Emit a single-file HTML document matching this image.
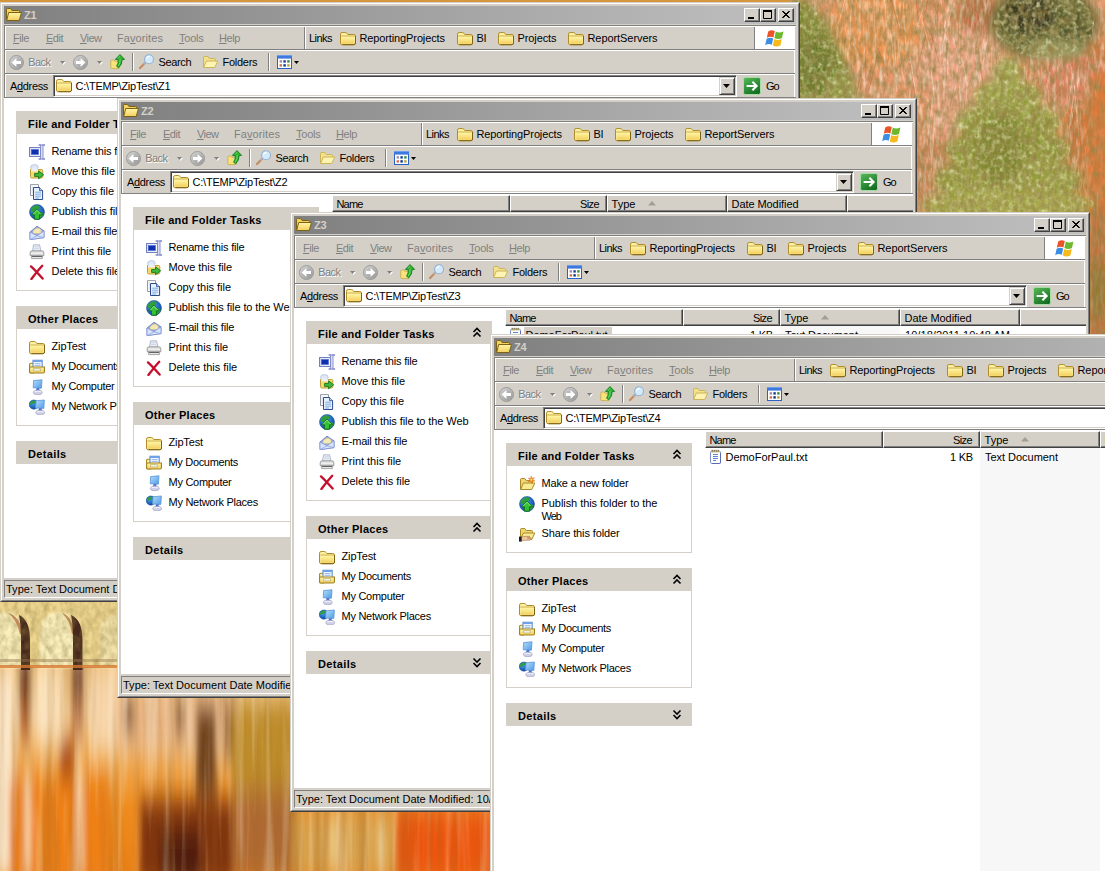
<!DOCTYPE html><html><head><meta charset="utf-8"><title>Z1 Z2 Z3 Z4</title><style>
html,body{margin:0;padding:0;background:#fff;}
body{width:1115px;height:871px;overflow:hidden;position:relative;font:11px/13px "Liberation Sans", sans-serif;color:#000;}
#desk{position:absolute;left:0;top:0;width:1105px;height:871px;overflow:hidden;background:#d9954a;}
#desk div,#desk span,#desk svg.i{position:absolute;box-sizing:border-box;}
.t{white-space:pre;line-height:13px;height:13px;}
.b{font-weight:bold;}
.sh{text-shadow:1px 1px 0 #fff;}
u{text-decoration:underline;text-underline-offset:1px;}
.win{width:800px;height:600px;background:#d4d0c8;border:1px solid;border-color:#d4d0c8 #404040 #404040 #d4d0c8;overflow:hidden;}
.win>*{margin:-1px 0 0 -1px;}
.win2{left:1px;top:1px;width:798px;height:598px;border:1px solid;border-color:#fff #808080 #808080 #fff;}
.cb{width:16px;height:14px;background:#d4d0c8;border:1px solid;border-color:#fff #404040 #404040 #fff;box-shadow:inset -1px -1px 0 #808080;}
.combo{background:#fff;border:1px solid;border-color:#808080 #fff #fff #808080;box-shadow:inset 1px 1px 0 #404040, inset -1px -1px 0 #d4d0c8;}
.ddb{width:16px;height:18px;background:#d4d0c8;border:1px solid;border-color:#d4d0c8 #404040 #404040 #d4d0c8;box-shadow:inset 1px 1px 0 #fff, inset -1px -1px 0 #808080;}
.lh{background:#d4d0c8;border:1px solid;border-color:#fff #404040 #404040 #fff;box-shadow:inset -1px -1px 0 #808080;}
.sb{border:1px solid;border-color:#808080 #fff #fff #808080;overflow:hidden;}
</style></head><body><svg width="0" height="0" style="position:absolute"><defs>
<linearGradient id="gF" x1="0" y1="0" x2="0" y2="1"><stop offset="0" stop-color="#fff7a8"/><stop offset="1" stop-color="#f3cf5e"/></linearGradient>
<linearGradient id="gC" x1="0" y1="0" x2="1" y2="1"><stop offset="0" stop-color="#d6d6d6"/><stop offset="1" stop-color="#8e8e8e"/></linearGradient>
<linearGradient id="gG" x1="0" y1="0" x2="0.6" y2="1"><stop offset="0" stop-color="#58bb58"/><stop offset="1" stop-color="#167024"/></linearGradient>
<radialGradient id="gE" cx="0.4" cy="0.35" r="0.7"><stop offset="0" stop-color="#4a9cf0"/><stop offset="1" stop-color="#0c47a6"/></radialGradient>
<linearGradient id="gM" x1="0" y1="0" x2="1" y2="1"><stop offset="0" stop-color="#b4defc"/><stop offset="1" stop-color="#4f9be6"/></linearGradient>
</defs></svg><div id="desk"><svg class="i" style="left:0;top:0" width="1105" height="871" viewBox="0 0 1105 871">
<defs>
<filter id="b6" x="-10%" y="-10%" width="120%" height="120%"><feGaussianBlur stdDeviation="5"/></filter>
<filter id="b3" x="-10%" y="-10%" width="120%" height="120%"><feGaussianBlur stdDeviation="1.2"/></filter>
<filter id="bv" x="-10%" y="-10%" width="120%" height="120%"><feGaussianBlur stdDeviation="3 14"/></filter>
<filter id="nz" x="0" y="0" width="100%" height="100%"><feTurbulence type="fractalNoise" baseFrequency="0.16 0.11" numOctaves="3" seed="7"/><feColorMatrix type="matrix" values="0 0 0 0 0.30  0 0 0 0 0.22  0 0 0 0 0.06  1.1 1.1 0 0 -0.8"/></filter>
<filter id="nl" x="0" y="0" width="100%" height="100%"><feTurbulence type="fractalNoise" baseFrequency="0.3 0.07" numOctaves="3" seed="11"/><feColorMatrix type="matrix" values="0 0 0 0 1  0 0 0 0 0.92  0 0 0 0 0.78  0 1.1 1.1 0 -0.95"/></filter>
<filter id="ng" x="0" y="0" width="100%" height="100%"><feTurbulence type="fractalNoise" baseFrequency="0.22 0.2" numOctaves="2" seed="21"/><feColorMatrix type="matrix" values="0 0 0 0 0.85  0 0 0 0 0.88  0 0 0 0 0.5  0 1.6 1.2 0 -1.25"/></filter>
<filter id="nd" x="0" y="0" width="100%" height="100%"><feTurbulence type="fractalNoise" baseFrequency="0.2 0.22" numOctaves="2" seed="33"/><feColorMatrix type="matrix" values="0 0 0 0 0.2  0 0 0 0 0.24  0 0 0 0 0.05  1.6 0 1.2 0 -1.2"/></filter>
<clipPath id="cCon"><path d="M806 0L826 22L840 50L852 78L858 102L792 102L792 0Z"/><ellipse cx="1044" cy="24" rx="50" ry="34"/><ellipse cx="1008" cy="72" rx="14" ry="14"/><ellipse cx="1008" cy="96" rx="34" ry="16"/><ellipse cx="1008" cy="122" rx="52" ry="20"/><ellipse cx="1008" cy="150" rx="62" ry="22"/><ellipse cx="1008" cy="180" rx="74" ry="24"/><ellipse cx="1008" cy="204" rx="86" ry="16"/></clipPath>
<filter id="ws" x="0" y="0" width="100%" height="100%"><feTurbulence type="fractalNoise" baseFrequency="0.09 0.004" numOctaves="3" seed="3"/><feColorMatrix type="matrix" values="0 0 0 0 0.3  0 0 0 0 0.12  0 0 0 0 0.02  1.6 0 0 0 -0.7"/></filter>
<filter id="wl" x="0" y="0" width="100%" height="100%"><feTurbulence type="fractalNoise" baseFrequency="0.11 0.005" numOctaves="3" seed="9"/><feColorMatrix type="matrix" values="0 0 0 0 1  0 0 0 0 0.92  0 0 0 0 0.75  0 1.5 0 0 -0.72"/></filter>
<linearGradient id="wg" x1="0" y1="0" x2="0" y2="1">
<stop offset="0" stop-color="rgb(244,198,128)"/><stop offset="0.25" stop-color="rgb(244,202,144)"/><stop offset="0.5" stop-color="rgb(240,166,76)"/><stop offset="0.7" stop-color="rgb(238,140,30)"/><stop offset="1" stop-color="rgb(232,128,22)"/></linearGradient>
<clipPath id="cTR"><rect x="790" y="0" width="315" height="345"/></clipPath>
<clipPath id="cBL"><rect x="0" y="596" width="495" height="275"/></clipPath>
</defs>
<rect width="1105" height="871" fill="rgb(222,150,90)"/>
<rect x="0" y="0" width="800" height="3" fill="rgb(214,150,60)"/>
<g clip-path="url(#cTR)">
<rect x="790" y="0" width="315" height="345" fill="rgb(230,152,108)"/>
<g filter="url(#b6)">
<ellipse cx="875" cy="28" rx="48" ry="40" fill="rgb(238,150,84)"/>
<ellipse cx="960" cy="90" rx="50" ry="60" fill="rgb(238,164,132)"/>
<ellipse cx="905" cy="120" rx="30" ry="40" fill="rgb(232,150,104)"/>
<ellipse cx="1092" cy="130" rx="28" ry="90" fill="rgb(216,118,62)"/>
<ellipse cx="1075" cy="75" rx="30" ry="22" fill="rgb(226,128,96)"/>
<ellipse cx="935" cy="175" rx="26" ry="40" fill="rgb(212,136,92)"/>
<ellipse cx="978" cy="14" rx="20" ry="20" fill="rgb(196,112,72)"/>
<ellipse cx="1072" cy="84" rx="36" ry="20" fill="rgb(226,132,100)"/>
</g>
<rect x="790" y="0" width="315" height="345" filter="url(#nl)" opacity=".7"/>
<path d="M1000 165l9 -61M843 111l3 -67M959 68l1 -49M909 199l-7 -59M999 45l7 -25M1095 190l9 -38M889 203l9 -56M931 52l-9 -32M836 152l-4 -40M919 114l-9 -57M1034 185l6 -26M837 29l9 -33M1081 204l-3 -40M864 166l7 -61M859 86l8 -52M979 81l-6 -39M1018 214l-9 -32M943 66l7 -52M850 199l-0 -26M1029 205l6 -53M875 185l-1 -38M1094 108l5 -47M942 49l10 -42M967 86l-5 -29M931 173l4 -60M931 157l-0 -38M913 204l2 -54M901 151l6 -46M927 146l7 -58M1066 154l9 -69M879 183l-0 -67M1029 54l2 -60M1000 171l4 -54M952 147l4 -35M960 64l-7 -27M886 27l-2 -46M898 196l-2 -25M865 182l-9 -42M979 86l9 -51M1050 145l-7 -42M1089 209l-3 -52M864 130l-7 -53M935 104l-4 -35M1090 198l-5 -52M945 82l-0 -69M867 141l-4 -45M838 124l9 -37M906 50l-4 -69M1006 138l-8 -58M976 86l1 -38M1032 135l-5 -27M1070 126l6 -26M1023 143l8 -47M1061 58l7 -38M1019 104l6 -38M962 127l-3 -47M1050 33l6 -35M842 161l10 -69M1058 63l9 -54M913 199l2 -32M1000 28l-2 -30M987 165l-7 -65M994 115l-3 -67M875 143l8 -48M905 128l5 -36M897 92l-6 -58M858 150l-8 -29M1067 114l6 -40M849 49l4 -68M1093 150l-7 -62M897 85l-3 -53M1055 146l-1 -61M992 132l-2 -58M889 28l-0 -65M960 194l-1 -53M876 51l-2 -42M902 74l-4 -32M844 200l9 -42M960 204l3 -30M1028 52l-10 -34M941 210l-4 -41M1029 160l-5 -32M1006 104l-10 -69M944 29l10 -50M860 34l-0 -65M900 30l-9 -43M916 30l9 -27M942 124l-4 -29M1079 137l-6 -64M964 131l3 -42" stroke="rgb(255,238,220)" stroke-width=".9" fill="none" opacity=".55"/>
<path d="M917 108l-7 -44M866 81l7 -18M1052 81l-10 -20M900 36l2 -30M900 32l-11 -40M888 76l-10 -28M946 81l1 -41M1072 148l2 -42M952 179l11 -38M1028 157l7 -24M936 45l-8 -17M905 152l-10 -25M1037 129l-11 -16M869 90l11 -45M997 65l-3 -30M923 22l8 -35M1028 39l-8 -34M1023 107l7 -48M866 82l-1 -47M950 106l10 -42M976 209l-10 -36M1051 102l11 -17M844 133l9 -32M939 62l-7 -25M984 90l-6 -41M928 68l8 -49M1060 141l-9 -29M1055 116l-8 -16M861 160l-7 -47M1046 83l9 -39M1000 176l-12 -28M971 134l-3 -21M919 25l-3 -26M961 157l12 -29M1051 200l4 -39M977 176l2 -28M1015 122l-10 -25M858 89l6 -35M1024 80l-5 -48M1025 34l4 -41M1089 195l8 -39M1031 139l0 -22M1072 67l1 -49M939 21l-8 -29M1008 195l3 -47M937 41l1 -39M1025 93l-7 -46M916 72l10 -37M879 143l-7 -42M852 130l9 -44M1028 101l1 -30M1075 79l3 -25M1091 57l-9 -16M984 138l-7 -21M993 146l5 -39M851 115l11 -44M919 186l10 -38M896 156l-1 -44M862 58l-10 -20M875 140l6 -19" stroke="rgb(190,90,50)" stroke-width="1" fill="none" opacity=".4"/>
<g filter="url(#b6)">
<path d="M806 0 L826 22 L840 50 L852 78 L858 102 L792 102 L792 0 Z" fill="rgb(124,138,46)"/>
<ellipse cx="816" cy="66" rx="20" ry="30" fill="rgb(100,118,34)"/>
<ellipse cx="838" cy="88" rx="14" ry="12" fill="rgb(150,160,70)"/>
<ellipse cx="1044" cy="22" rx="54" ry="38" fill="rgb(98,100,48)"/>
<ellipse cx="1030" cy="14" rx="28" ry="20" fill="rgb(46,44,24)"/>
<ellipse cx="1075" cy="30" rx="18" ry="16" fill="rgb(70,72,34)"/>
<ellipse cx="1058" cy="50" rx="30" ry="10" fill="rgb(150,152,96)"/>
<ellipse cx="1008" cy="72" rx="14" ry="14" fill="rgb(162,168,72)"/>
<ellipse cx="1008" cy="96" rx="34" ry="16" fill="rgb(158,164,66)"/>
<ellipse cx="1008" cy="122" rx="52" ry="20" fill="rgb(150,158,58)"/>
<ellipse cx="1008" cy="150" rx="62" ry="22" fill="rgb(144,152,54)"/>
<ellipse cx="1008" cy="180" rx="74" ry="24" fill="rgb(154,160,60)"/>
<ellipse cx="1008" cy="206" rx="86" ry="18" fill="rgb(170,172,72)"/>
<ellipse cx="1000" cy="150" rx="24" ry="36" fill="rgb(124,134,42)"/>
<ellipse cx="1100" cy="140" rx="16" ry="70" fill="rgb(220,120,56)"/>
<rect x="1086" y="208" width="24" height="134" fill="rgb(190,114,58)"/>
<ellipse cx="1098" cy="290" rx="10" ry="30" fill="rgb(150,118,50)"/>
</g>
<g clip-path="url(#cCon)"><rect x="790" y="0" width="315" height="220" filter="url(#ng)" opacity=".95"/><rect x="790" y="0" width="315" height="220" filter="url(#nd)" opacity=".5"/></g>
<rect x="790" y="0" width="315" height="345" filter="url(#nz)"/>
<rect x="790" y="0" width="315" height="345" filter="url(#nl)" opacity=".22"/>
</g>
<g clip-path="url(#cBL)">
<rect x="0" y="660" width="495" height="211" fill="url(#wg)"/>
<g filter="url(#bv)">
<rect x="-6" y="670" width="20" height="210" fill="rgb(250,228,196)"/>
<rect x="34" y="670" width="30" height="70" fill="rgb(250,222,180)"/>
<rect x="90" y="670" width="28" height="80" fill="rgb(248,214,170)"/>
<rect x="118" y="690" width="120" height="60" fill="rgb(232,180,130)"/>
<rect x="20" y="655" width="10" height="62" fill="rgb(92,44,22)"/>
<rect x="21" y="700" width="8" height="40" fill="rgb(170,90,40)"/>
<rect x="73" y="655" width="10" height="62" fill="rgb(92,44,22)"/>
<rect x="74" y="700" width="8" height="40" fill="rgb(170,90,40)"/>
<rect x="60" y="740" width="14" height="60" fill="rgb(170,80,20)"/>
<rect x="124" y="700" width="10" height="30" fill="rgb(110,70,40)"/>
<rect x="176" y="700" width="8" height="34" fill="rgb(120,80,50)"/>
<rect x="196" y="705" width="20" height="90" fill="rgb(112,66,30)"/>
<rect x="224" y="700" width="10" height="60" fill="rgb(150,100,50)"/>
<rect x="140" y="800" width="92" height="90" fill="rgb(128,52,10)"/>
<rect x="160" y="830" width="40" height="60" fill="rgb(80,30,8)"/>
<rect x="232" y="700" width="62" height="90" fill="rgb(190,140,44)"/>
<rect x="232" y="790" width="62" height="90" fill="rgb(176,106,48)"/>
<rect x="292" y="810" width="104" height="70" fill="rgb(216,160,72)"/>
<rect x="396" y="810" width="100" height="70" fill="rgb(236,84,14)"/>
<rect x="10" y="780" width="100" height="100" fill="rgb(238,128,18)"/>
<rect x="25" y="770" width="5" height="110" fill="rgb(250,226,180)"/>
<rect x="78" y="770" width="5" height="110" fill="rgb(250,220,170)"/>
<rect x="330" y="812" width="6" height="60" fill="rgb(240,210,140)"/>
<rect x="378" y="812" width="6" height="60" fill="rgb(236,200,130)"/>
</g>
<rect x="0" y="666" width="495" height="205" filter="url(#ws)" opacity=".45"/>
<rect x="0" y="666" width="495" height="205" filter="url(#wl)" opacity=".6"/>
<rect x="0" y="598" width="120" height="69" fill="rgb(238,214,144)"/>
<g filter="url(#b3)">
<path d="M-14 668 V636 Q-14 612 5 612 Q24 612 24 636 V668Z" fill="rgb(250,240,190)"/>
<path d="M40 668 V636 Q40 612 59 612 Q78 612 78 636 V668Z" fill="rgb(250,240,190)"/>
<path d="M100 668 V634 Q100 616 118 614 V668Z" fill="rgb(242,226,170)"/>
</g>
<path d="M8 613 Q20 616 23 634 L20 634 Q17 620 8 613Z" fill="rgb(200,140,90)"/>
<path d="M19 615 Q30 620 30 640 V670 H21 V640 Q21 626 19 615Z" fill="rgb(70,40,28)"/>
<path d="M62 613 Q72 616 75 634 L72 634 Q70 620 62 613Z" fill="rgb(200,140,90)"/>
<path d="M71 615 Q82.5 620 82.5 640 V670 H73 V640 Q73 626 71 615Z" fill="rgb(70,40,28)"/>
<rect x="0" y="598" width="120" height="68" filter="url(#nz)" opacity=".55"/>
<rect x="0" y="659" width="120" height="3" fill="rgb(150,120,80)" opacity=".45"/>
<rect x="0" y="665" width="120" height="3" fill="rgb(214,120,50)" opacity=".8"/>
</g>
</svg><div class="win" style="left:0px;top:2px"><div class="win2"></div><div style="left:4px;top:4px;width:792px;height:18px;background:linear-gradient(90deg,#808080,#c0c0c0)"></div><svg class="i" style="left:6px;top:5px" width="16" height="16" viewBox="0 0 16 16"><path d="M0.5 12.5V2.6Q0.5 1.5 1.6 1.5H4.6L6 3.5H12.4Q13.5 3.5 13.5 4.6V6" fill="#f3d45e" stroke="#7d6216"/><path d="M0.7 13.5L2.7 5.5H15.5L13.2 13.5Z" fill="url(#gF)" stroke="#7d6216" stroke-linejoin="round"/></svg><span class="t b" style="left:24px;top:7px;letter-spacing:-0.172px;color:#d4d0c8;">Z1</span><div class="cb" style="left:744px;top:6px"><svg width="14" height="12" viewBox="0 0 14 12" style="position:absolute;left:0;top:0"><rect x="3" y="8" width="6" height="2" fill="#000"/></svg></div><div class="cb" style="left:760px;top:6px"><svg width="14" height="12" viewBox="0 0 14 12" style="position:absolute;left:0;top:0"><path d="M2.5 1.5h8v8h-8z" fill="none" stroke="#000" stroke-width="1"/><rect x="2" y="1" width="9" height="2" fill="#000"/></svg></div><div class="cb" style="left:778px;top:6px"><svg width="14" height="12" viewBox="0 0 14 12" style="position:absolute;left:0;top:0"><path d="M3.5 2.5l6 6M4.5 2.5l6 6M9.5 2.5l-6 6M10.5 2.5l-6 6" stroke="#000" stroke-width="1" fill="none" stroke-linecap="square"/></svg></div><div style="left:4px;top:23px;width:792px;height:1px;background:#808080"></div><div style="left:4px;top:24px;width:792px;height:1px;background:#fff"></div><div style="left:4px;top:23px;width:1px;height:73px;background:#808080"></div><div style="left:5px;top:24px;width:1px;height:71px;background:#fff"></div><div style="left:794px;top:24px;width:1px;height:71px;background:#fff"></div><div style="left:5px;top:47px;width:790px;height:1px;background:#808080"></div><div style="left:5px;top:48px;width:790px;height:1px;background:#fff"></div><div style="left:5px;top:71px;width:790px;height:1px;background:#808080"></div><div style="left:5px;top:72px;width:790px;height:1px;background:#fff"></div><div style="left:4px;top:95px;width:792px;height:1px;background:#808080"></div><span class="t" style="left:13px;top:30px;letter-spacing:-0.434px;color:#808080;"><u>F</u>ile</span><span class="t" style="left:46px;top:30px;letter-spacing:-0.492px;color:#808080;"><u>E</u>dit</span><span class="t" style="left:80px;top:30px;letter-spacing:-0.539px;color:#808080;"><u>V</u>iew</span><span class="t" style="left:117px;top:30px;letter-spacing:0.083px;color:#808080;">Fa<u>v</u>orites</span><span class="t" style="left:179px;top:30px;letter-spacing:-0.237px;color:#808080;"><u>T</u>ools</span><span class="t" style="left:219px;top:30px;letter-spacing:-0.406px;color:#808080;"><u>H</u>elp</span><div style="left:304px;top:25px;width:1px;height:22px;background:#808080"></div><div style="left:305px;top:25px;width:1px;height:22px;background:#fff"></div><span class="t" style="left:309px;top:30px;letter-spacing:-0.537px;">Links</span><svg class="i" style="left:340px;top:29px" width="16" height="16" viewBox="0 0 16 16"><path d="M0.5 3.2Q0.5 1.5 2.2 1.5H5.4Q6.3 1.5 6.9 2.3L7.8 3.5H13.8Q15.5 3.5 15.5 5.2V12Q15.5 13.7 13.8 13.7H2.2Q0.5 13.7 0.5 12Z" fill="#fdf2a4" stroke="#b08c28"/><path d="M1.5 5.5H14.5V11.8Q14.5 12.7 13.6 12.7H2.4Q1.5 12.7 1.5 11.8Z" fill="url(#gF)"/><path d="M1.2 5H14.8" stroke="#c6a23c" stroke-width="1" opacity=".85"/><path d="M15.5 5V12Q15.5 13.7 13.8 13.7H2.5" fill="none" stroke="#7d6216"/></svg><span class="t" style="left:359.5px;top:30px;letter-spacing:-0.120px;">ReportingProjects</span><svg class="i" style="left:457px;top:29px" width="16" height="16" viewBox="0 0 16 16"><path d="M0.5 3.2Q0.5 1.5 2.2 1.5H5.4Q6.3 1.5 6.9 2.3L7.8 3.5H13.8Q15.5 3.5 15.5 5.2V12Q15.5 13.7 13.8 13.7H2.2Q0.5 13.7 0.5 12Z" fill="#fdf2a4" stroke="#b08c28"/><path d="M1.5 5.5H14.5V11.8Q14.5 12.7 13.6 12.7H2.4Q1.5 12.7 1.5 11.8Z" fill="url(#gF)"/><path d="M1.2 5H14.8" stroke="#c6a23c" stroke-width="1" opacity=".85"/><path d="M15.5 5V12Q15.5 13.7 13.8 13.7H2.5" fill="none" stroke="#7d6216"/></svg><span class="t" style="left:476.5px;top:30px;letter-spacing:-0.453px;">BI</span><svg class="i" style="left:498px;top:29px" width="16" height="16" viewBox="0 0 16 16"><path d="M0.5 3.2Q0.5 1.5 2.2 1.5H5.4Q6.3 1.5 6.9 2.3L7.8 3.5H13.8Q15.5 3.5 15.5 5.2V12Q15.5 13.7 13.8 13.7H2.2Q0.5 13.7 0.5 12Z" fill="#fdf2a4" stroke="#b08c28"/><path d="M1.5 5.5H14.5V11.8Q14.5 12.7 13.6 12.7H2.4Q1.5 12.7 1.5 11.8Z" fill="url(#gF)"/><path d="M1.2 5H14.8" stroke="#c6a23c" stroke-width="1" opacity=".85"/><path d="M15.5 5V12Q15.5 13.7 13.8 13.7H2.5" fill="none" stroke="#7d6216"/></svg><span class="t" style="left:517.5px;top:30px;letter-spacing:-0.094px;">Projects</span><svg class="i" style="left:568px;top:29px" width="16" height="16" viewBox="0 0 16 16"><path d="M0.5 3.2Q0.5 1.5 2.2 1.5H5.4Q6.3 1.5 6.9 2.3L7.8 3.5H13.8Q15.5 3.5 15.5 5.2V12Q15.5 13.7 13.8 13.7H2.2Q0.5 13.7 0.5 12Z" fill="#fdf2a4" stroke="#b08c28"/><path d="M1.5 5.5H14.5V11.8Q14.5 12.7 13.6 12.7H2.4Q1.5 12.7 1.5 11.8Z" fill="url(#gF)"/><path d="M1.2 5H14.8" stroke="#c6a23c" stroke-width="1" opacity=".85"/><path d="M15.5 5V12Q15.5 13.7 13.8 13.7H2.5" fill="none" stroke="#7d6216"/></svg><span class="t" style="left:587.5px;top:30px;letter-spacing:-0.071px;">ReportServers</span><div style="left:756px;top:24px;width:39px;height:23px;background:#fff"></div><div style="left:754px;top:25px;width:1px;height:22px;background:#808080"></div><div style="left:755px;top:25px;width:1px;height:22px;background:#fff"></div><svg class="i" style="left:764px;top:27px" width="22" height="18" viewBox="0 0 22 18"><path d="M4.2 2.4Q7.4 0.2 10.8 2L9.4 8.4Q6.2 6.8 2.8 8.8Z" fill="#ea5428"/><path d="M11.8 2.6Q15.2 4.6 19.4 2.4L18 9Q14 11.2 10.4 9Z" fill="#6cb82e"/><path d="M2.6 9.8Q5.8 7.8 9.2 9.4L7.8 15.8Q4.4 14.2 1.2 16.2Z" fill="#3c8ee4"/><path d="M10.2 10Q13.6 12.2 17.8 10L16.4 16.4Q12.4 18.6 8.8 16.4Z" fill="#f6ba1e"/></svg><svg class="i" style="left:8px;top:52px" width="17" height="17" viewBox="0 0 17 17"><circle cx="8.5" cy="8.5" r="7" fill="url(#gC)" stroke="#9a9a9a"/><circle cx="8.5" cy="8.5" r="6" fill="none" stroke="#e6e6e6" stroke-width=".6" opacity=".3"/><path d="M3.6 8.5L8.4 3.9V6.9H13V10.1H8.4V13.1Z" fill="#fff"/></svg><span class="t sh" style="left:28.3px;top:54px;letter-spacing:-0.617px;color:#808080;">Back</span><svg class="i" style="left:60px;top:59px" width="7" height="5" viewBox="0 0 7 5"><path d="M1 1h5l-2.5 3z" fill="#fff"/><path d="M0 0h5l-2.5 3z" fill="#808080"/></svg><svg class="i" style="left:72px;top:52px" width="17" height="17" viewBox="0 0 17 17"><circle cx="8.5" cy="8.5" r="7" fill="url(#gC)" stroke="#9a9a9a"/><circle cx="8.5" cy="8.5" r="6" fill="none" stroke="#e6e6e6" stroke-width=".6" opacity=".3"/><path d="M13.4 8.5L8.6 3.9V6.9H4V10.1H8.6V13.1Z" fill="#fff"/></svg><svg class="i" style="left:97px;top:59px" width="7" height="5" viewBox="0 0 7 5"><path d="M1 1h5l-2.5 3z" fill="#fff"/><path d="M0 0h5l-2.5 3z" fill="#808080"/></svg><svg class="i" style="left:110px;top:52px" width="17" height="17" viewBox="0 0 17 17"><path d="M0.8 7.2Q0.8 6 2 6H3.8L4.8 7.2H8.4Q9.4 7.2 9.4 8.2V13.4Q9.4 14.6 8.2 14.6H2Q0.8 14.6 0.8 13.4Z" fill="#f8e27c" stroke="#c8a83a" stroke-width=".8"/><path d="M10 0.6L14.6 5.4H12.2Q12.2 10.5 8.6 13.8L6.6 12.2Q8.6 9.5 8.2 5.4H5.4Z" fill="#30b530" stroke="#127a1e" stroke-width=".9" stroke-linejoin="round"/><path d="M10 2.2L8 4.4M10.2 5Q10.4 9 8.4 12" stroke="#8fe88f" stroke-width=".8" fill="none" opacity=".8"/></svg><div style="left:132px;top:51px;width:1px;height:18px;background:#808080"></div><div style="left:133px;top:51px;width:1px;height:18px;background:#fff"></div><svg class="i" style="left:138px;top:52px" width="17" height="17" viewBox="0 0 17 17"><path d="M7.2 8.8L2 14" stroke="#c88a5c" stroke-width="2.2" stroke-linecap="round"/><path d="M7.4 8.2L5.4 10.2" stroke="#b0b0b8" stroke-width="2"/><circle cx="11" cy="5.2" r="4.5" fill="#d4eafa" stroke="#8fb2d4" stroke-width="1.1"/><path d="M8.4 4.6Q9.2 2.4 11.6 2.4" stroke="#fff" stroke-width="1.2" fill="none"/></svg><span class="t" style="left:158.5px;top:54px;letter-spacing:-0.360px;">Search</span><svg class="i" style="left:202px;top:52px" width="17" height="16" viewBox="0 0 17 16"><path d="M1.5 13.5V3.6Q1.5 2.5 2.6 2.5H5.8L7.3 4.5H12.5Q13.5 4.5 13.5 5.5V7" fill="#f3e18c" stroke="#cdb458"/><path d="M1.6 13.5L4.4 7H15.8L12.8 13.5Z" fill="#fdf4b4" stroke="#cdb458" stroke-linejoin="round"/></svg><span class="t" style="left:222.5px;top:54px;letter-spacing:-0.270px;">Folders</span><div style="left:268px;top:51px;width:1px;height:18px;background:#808080"></div><div style="left:269px;top:51px;width:1px;height:18px;background:#fff"></div><svg class="i" style="left:276px;top:52px" width="17" height="16" viewBox="0 0 17 16"><rect x="1.5" y="1.5" width="14" height="13" fill="#fff" stroke="#2b60c6"/><rect x="1" y="1" width="15" height="3.6" fill="#3c78de"/><rect x="1" y="1" width="15" height="1" fill="#6c9cec"/><rect x="3.6" y="6.2" width="2.4" height="2.4" fill="#9c8cb4"/><rect x="7.4" y="6.2" width="2.4" height="2.4" fill="#1a3e96"/><rect x="11.2" y="6.2" width="2.4" height="2.4" fill="#2c8c3c"/><rect x="3.6" y="10.2" width="2.4" height="2.4" fill="#d4704c"/><rect x="7.4" y="10.2" width="2.4" height="2.4" fill="#10368c"/><rect x="11.2" y="10.2" width="2.4" height="2.4" fill="#b4a03c"/></svg><svg class="i" style="left:294px;top:59px" width="6" height="4" viewBox="0 0 6 4"><path d="M0 0h5l-2.5 3z" fill="#000"/></svg><span class="t" style="left:10px;top:78px;letter-spacing:-0.337px;">A<u>d</u>dress</span><div class="combo" style="left:53px;top:73px;width:684px;height:22px;"></div><svg class="i" style="left:56px;top:76px" width="16" height="16" viewBox="0 0 16 16"><path d="M0.5 3.2Q0.5 1.5 2.2 1.5H5.4Q6.3 1.5 6.9 2.3L7.8 3.5H13.8Q15.5 3.5 15.5 5.2V12Q15.5 13.7 13.8 13.7H2.2Q0.5 13.7 0.5 12Z" fill="#fdf2a4" stroke="#b08c28"/><path d="M1.5 5.5H14.5V11.8Q14.5 12.7 13.6 12.7H2.4Q1.5 12.7 1.5 11.8Z" fill="url(#gF)"/><path d="M1.2 5H14.8" stroke="#c6a23c" stroke-width="1" opacity=".85"/><path d="M15.5 5V12Q15.5 13.7 13.8 13.7H2.5" fill="none" stroke="#7d6216"/></svg><span class="t" style="left:75.5px;top:78px;letter-spacing:-0.224px;">C:\TEMP\ZipTest\Z1</span><div class="ddb" style="left:719px;top:75px"><svg width="16" height="18" viewBox="0 0 16 18" style="position:absolute;left:-1px;top:-1px"><path d="M4 7h7l-3.5 4z" fill="#000"/></svg></div><svg class="i" style="left:743px;top:75px" width="18" height="18" viewBox="0 0 18 18"><rect x="0.5" y="0.5" width="17" height="17" rx="1.8" fill="url(#gG)" stroke="#a4dca4"/><path d="M3.6 9H13M9.4 4.8L13.6 9L9.4 13.2" fill="none" stroke="#fff" stroke-width="2.1" stroke-linejoin="miter"/></svg><span class="t" style="left:766px;top:78px;letter-spacing:-1.094px;">Go</span><div style="left:4px;top:96px;width:792px;height:480px;background:#fff"></div><div style="left:16px;top:109px;width:186px;height:23px;background:#d4d0c8"></div><span class="t b" style="left:28px;top:116px;letter-spacing:0.235px;">File and Folder Tasks</span><svg class="i" style="left:182px;top:115px" width="10" height="11" viewBox="0 0 10 11"><path d="M1.5 5L5 1.5L8.5 5M1.5 9.5L5 6L8.5 9.5" fill="none" stroke="#000" stroke-width="1.6"/></svg><div style="left:16px;top:132px;width:186px;height:157px;border:1px solid #d4d0c8;border-top:0;background:#fff"></div><svg class="i" style="left:29px;top:142px" width="16" height="16" viewBox="0 0 16 16"><rect x="0.6" y="3.6" width="11" height="8.8" fill="#fff" stroke="#6c7cba" stroke-width="1.1"/><rect x="2.2" y="5.4" width="7.4" height="5.2" fill="#1030b4"/><rect x="2.2" y="5.4" width="7.4" height="5.2" fill="none" stroke="#5c74d4" stroke-width=".7"/><path d="M11.6 1.4V14.6H14V1.4Z" fill="#e2e6f8" stroke="#7c84c6" stroke-width=".9"/><path d="M9.6 0.9H16M9.6 15.1H16" stroke="#7c84c6" stroke-width="1.5" fill="none"/><path d="M12.8 0.4V1.6M12.8 14.4V15.6" stroke="#e2e6f8" stroke-width="1"/></svg><span class="t" style="left:51.5px;top:143px;letter-spacing:-0.180px;">Rename this file</span><svg class="i" style="left:29px;top:162px" width="16" height="16" viewBox="0 0 16 16"><path d="M1.5 6Q1.5 4.5 3 4.5H6L7 5.5H12.5Q13.8 5.5 13.8 6.8V12.5Q13.8 14 12.4 14H3Q1.5 14 1.5 12.6Z" fill="#f6d96c" stroke="#b8962e" stroke-width=".9"/><ellipse cx="5.4" cy="3.2" rx="3.8" ry="2.6" fill="#dfe8f6" stroke="#a8b8d4" stroke-width=".7"/><path d="M2.4 4.6L8.6 4.6L9.4 7.4H2Z" fill="#eef2fa" opacity=".9"/><path d="M5.6 9.4H9.6V6.8L14.6 10.8L9.6 14.8V12.4H5.6Z" fill="#3cba3c" stroke="#15741f" stroke-width=".9" stroke-linejoin="round"/></svg><span class="t" style="left:51.5px;top:163px;letter-spacing:-0.050px;">Move this file</span><svg class="i" style="left:29px;top:182px" width="16" height="16" viewBox="0 0 16 16"><path d="M1.5 0.6H9.5V11.5H1.5Z" fill="#fff" stroke="#8a8e9e" stroke-width=".9"/><path d="M2.6 3H4M2.6 5H4M2.6 7H4M2.6 9H4" stroke="#b0b4c4" stroke-width=".7"/><path d="M4.5 3.5H10.5L13.6 6.6V15.5H4.5Z" fill="#e6f1ff" stroke="#2c4c8e"/><path d="M10.5 3.5V6.6H13.6" fill="#b8cef0" stroke="#2c4c8e" stroke-width=".8"/><path d="M6.2 8.2H12M6.2 10.2H12M6.2 12.2H12M6.2 14H10" stroke="#7ca4dc" stroke-width=".9"/></svg><span class="t" style="left:51.5px;top:183px;letter-spacing:-0.035px;">Copy this file</span><svg class="i" style="left:29px;top:202px" width="16" height="16" viewBox="0 0 16 16"><circle cx="8" cy="8" r="7.5" fill="url(#gE)" stroke="#0d3f8e" stroke-width=".5"/><path d="M3.875 2.75q3.75 -2.625 6.75 -0.375q-0.75 3.75 -3.375 4.125q-3.75 2.25 -5.625 1.125q-0.75 -3.0 2.25 -4.875z" fill="#2f9e3e"/><path d="M10.625 8.375q3.0 -0.75 4.125 1.5q-1.5 3.75 -4.5 4.5q-1.5 -3.0 0.375 -6.0z" fill="#2f9e3e"/><path d="M8 5.2L13.4 10.8H10.6V15.2H5.4V10.8H2.6Z" fill="#34c234" stroke="#0c6a1c" stroke-width=".9" stroke-linejoin="round"/><path d="M8 6.2L4.2 10.2M8 6.2L11.8 10.2" stroke="#b4f4a0" stroke-width=".8" fill="none"/></svg><span class="t" style="left:51.5px;top:203px;letter-spacing:-0.086px;">Publish this file to the Web</span><svg class="i" style="left:29px;top:222px" width="16" height="16" viewBox="0 0 16 16"><path d="M1 8L8 2.2L15 6.8V13.6L1 15.6Z" fill="#98ace6" stroke="#6278c4" stroke-width=".8" stroke-linejoin="round"/><path d="M4 7Q8 1.6 12.2 5.8V9.5H4Z" fill="#f4e8b4" stroke="#cbb66e" stroke-width=".5"/><path d="M1 8L8 11.8L15 6.8V13.6L1 15.6Z" fill="#d8e4fc" stroke="#7c90d4" stroke-width=".7" stroke-linejoin="round"/><path d="M1 15.6L8 11.8L15 13.6" stroke="#8ea2dc" fill="none" stroke-width=".7"/></svg><span class="t" style="left:51.5px;top:223px;letter-spacing:-0.173px;">E-mail this file</span><svg class="i" style="left:29px;top:242px" width="16" height="16" viewBox="0 0 16 16"><path d="M4.6 0.8H10.6L12 7.4H3.4Z" fill="#e8eef8" stroke="#a4acc0" stroke-width=".8"/><path d="M5.4 2.6H9.8M5.2 4.4H10.2" stroke="#c0c8dc" stroke-width=".6"/><path d="M1.2 8.6Q1.2 6.8 3.4 6.8H12.6Q14.8 6.8 14.8 8.6V11.8H1.2Z" fill="#dcdcdc" stroke="#8a8a8a" stroke-width=".8"/><path d="M2.6 11.4H13.4V14.6H2.6Z" fill="#f6f6f6" stroke="#909090" stroke-width=".8"/><path d="M3 12.6H13" stroke="#555" stroke-width="1"/><path d="M2 9.2H14" stroke="#fff" stroke-width=".8"/></svg><span class="t" style="left:51.5px;top:243px;letter-spacing:-0.015px;">Print this file</span><svg class="i" style="left:29px;top:262px" width="16" height="16" viewBox="0 0 16 16"><path d="M2 2.4Q7 7 13.6 14.6M13.2 1.8Q8 7.5 2.4 15" stroke="#c4102c" stroke-width="2.3" fill="none" stroke-linecap="round"/></svg><span class="t" style="left:51.5px;top:263px;letter-spacing:-0.025px;">Delete this file</span><div style="left:16px;top:304px;width:186px;height:23px;background:#d4d0c8"></div><span class="t b" style="left:28px;top:311px;letter-spacing:0.270px;">Other Places</span><svg class="i" style="left:182px;top:310px" width="10" height="11" viewBox="0 0 10 11"><path d="M1.5 5L5 1.5L8.5 5M1.5 9.5L5 6L8.5 9.5" fill="none" stroke="#000" stroke-width="1.6"/></svg><div style="left:16px;top:327px;width:186px;height:97px;border:1px solid #d4d0c8;border-top:0;background:#fff"></div><svg class="i" style="left:29px;top:338px" width="16" height="16" viewBox="0 0 16 16"><path d="M0.5 3.2Q0.5 1.5 2.2 1.5H5.4Q6.3 1.5 6.9 2.3L7.8 3.5H13.8Q15.5 3.5 15.5 5.2V12Q15.5 13.7 13.8 13.7H2.2Q0.5 13.7 0.5 12Z" fill="#fdf2a4" stroke="#b08c28"/><path d="M1.5 5.5H14.5V11.8Q14.5 12.7 13.6 12.7H2.4Q1.5 12.7 1.5 11.8Z" fill="url(#gF)"/><path d="M1.2 5H14.8" stroke="#c6a23c" stroke-width="1" opacity=".85"/><path d="M15.5 5V12Q15.5 13.7 13.8 13.7H2.5" fill="none" stroke="#7d6216"/></svg><span class="t" style="left:51.5px;top:338px;letter-spacing:-0.138px;">ZipTest</span><svg class="i" style="left:29px;top:357px" width="16" height="16" viewBox="0 0 16 16"><g transform="translate(-1.2 0.6) scale(1.15 1)"><path d="M1.5 5Q1.5 3.6 3 3.6H5V13.5H3.2Q1.5 13.5 1.5 11.8Z" fill="#fdf2a4" stroke="#b08c28"/><path d="M4.5 0.6H12.5V9H4.5Z" fill="#eef5ff" stroke="#5a86c8" stroke-width=".9"/><path d="M4.5 0.6H12.5V2.4H4.5Z" fill="#6ea2e6"/><path d="M6 4H11M6 5.8H11" stroke="#8fb0e0" stroke-width=".8"/><path d="M1.5 7.5H14.5V11.8Q14.5 13.5 12.8 13.5H3.2Q1.5 13.5 1.5 11.8Z" fill="url(#gF)" stroke="#a08020"/><path d="M5 9H11V11.4H5Z" fill="#f4f4ee" stroke="#b8a860" stroke-width=".6"/></g></svg><span class="t" style="left:51.5px;top:358px;letter-spacing:-0.322px;">My Documents</span><svg class="i" style="left:29px;top:377px" width="16" height="16" viewBox="0 0 16 16"><g transform="translate(2 0.6)"><path d="M2.6 1L11 0.2L10.4 8.6L2.2 8.2Z" fill="url(#gM)" stroke="#5a94d8" stroke-width=".8" stroke-linejoin="round"/><path d="M5.6 8.4H8.2L8.6 11.4H5Z" fill="#4c74cc"/><ellipse cx="6.8" cy="12.8" rx="4.4" ry="2.2" fill="#d0d0e6" stroke="#9c9cc4" stroke-width=".7"/><path d="M3.4 12.2Q6.8 10.8 10.2 12.2" stroke="#fff" stroke-width=".8" fill="none"/></g></svg><span class="t" style="left:51.5px;top:378px;letter-spacing:-0.276px;">My Computer</span><svg class="i" style="left:29px;top:397px" width="16" height="16" viewBox="0 0 16 16"><circle cx="4.8" cy="5.6" r="4.6" fill="url(#gE)" stroke="#0d3f8e" stroke-width=".5"/><path d="M2.27 2.38q2.3 -1.6099999999999999 4.14 -0.22999999999999998q-0.45999999999999996 2.3 -2.07 2.53q-2.3 1.38 -3.4499999999999997 0.69q-0.45999999999999996 -1.8399999999999999 1.38 -2.9899999999999998z" fill="#2f9e3e"/><path d="M6.41 5.83q1.8399999999999999 -0.45999999999999996 2.53 0.9199999999999999q-0.9199999999999999 2.3 -2.76 2.76q-0.9199999999999999 -1.8399999999999999 0.22999999999999998 -3.6799999999999997z" fill="#2f9e3e"/><g transform="translate(4.4 0.8)"><path d="M2.6 1L11 0.2L10.4 8.6L2.2 8.2Z" fill="url(#gM)" stroke="#5a94d8" stroke-width=".8" stroke-linejoin="round"/><path d="M5.6 8.4H8.2L8.6 11.4H5Z" fill="#4c74cc"/><ellipse cx="6.8" cy="12.8" rx="4.4" ry="2.2" fill="#d0d0e6" stroke="#9c9cc4" stroke-width=".7"/><path d="M3.4 12.2Q6.8 10.8 10.2 12.2" stroke="#fff" stroke-width=".8" fill="none"/></g></svg><span class="t" style="left:51.5px;top:398px;letter-spacing:-0.279px;">My Network Places</span><div style="left:16px;top:439px;width:186px;height:23px;background:#d4d0c8"></div><span class="t b" style="left:28px;top:446px;letter-spacing:0.346px;">Details</span><svg class="i" style="left:182px;top:445px" width="10" height="11" viewBox="0 0 10 11"><path d="M1.5 1.5L5 5L8.5 1.5M1.5 6L5 9.5L8.5 6" fill="none" stroke="#000" stroke-width="1.6"/></svg><div class="lh" style="left:215px;top:97px;width:178px;height:17px;"></div><span class="t" style="left:219.5px;top:100px;letter-spacing:-0.836px;">Name</span><div class="lh" style="left:393px;top:97px;width:97px;height:17px;"></div><span class="t" style="left:463px;top:100px;letter-spacing:-0.602px;">Size</span><div class="lh" style="left:490px;top:97px;width:120px;height:17px;"></div><span class="t" style="left:494.5px;top:100px;letter-spacing:0.035px;">Type</span><svg class="i" style="left:531px;top:103px" width="8" height="5"><path d="M0 4.5L4 0L8 4.5z" fill="#a29e92"/></svg><div class="lh" style="left:610px;top:97px;width:120px;height:17px;"></div><span class="t" style="left:614.5px;top:100px;letter-spacing:-0.067px;">Date Modified</span><div class="lh" style="left:730px;top:97px;width:66px;height:17px;border-right:0;box-shadow:inset 0 -1px 0 #808080"></div><div style="left:490px;top:114px;width:120px;height:462px;background:#f7f7f7"></div><div style="left:234px;top:115px;width:88px;height:17px;background:#d4d0c8"></div><svg class="i" style="left:218px;top:115px" width="16" height="16" viewBox="0 0 16 16"><rect x="2.5" y="2.2" width="10" height="12.3" rx="1.2" fill="#fff" stroke="#7e8ec8"/><path d="M12.5 4V13.5Q12.5 14.5 11.5 14.5H4" stroke="#5c6cb0" fill="none"/><path d="M4.2 0.8V3.2M6.2 0.8V3.2M8.2 0.8V3.2M10.2 0.8V3.2" stroke="#6a5828" stroke-width="1"/><path d="M3 3H12" stroke="#d8c890" stroke-width=".8"/><path d="M5 5.5H10M5 7.5H10M5 9.5H10M5 11.5H8" stroke="#5c88dc" stroke-width="1"/></svg><span class="t" style="left:235.5px;top:117px;letter-spacing:-0.035px;">DemoForPaul.txt</span><span class="t" style="left:460px;top:117px;letter-spacing:-0.215px;">1 KB</span><span class="t" style="left:495px;top:117px;letter-spacing:-0.029px;">Text Document</span><span class="t" style="left:615px;top:117px;letter-spacing:0.064px;">10/18/2011 10:48 AM</span><div class="sb" style="left:4px;top:578px;width:780px;height:18px;"></div><span class="t" style="left:6px;top:581px;letter-spacing:0.012px;">Type: Text Document Date Modified: 10/18/2011 10:48 AM Size: 18 bytes</span></div><div class="win" style="left:117px;top:98px"><div class="win2"></div><div style="left:4px;top:4px;width:792px;height:18px;background:linear-gradient(90deg,#808080,#c0c0c0)"></div><svg class="i" style="left:6px;top:5px" width="16" height="16" viewBox="0 0 16 16"><path d="M0.5 12.5V2.6Q0.5 1.5 1.6 1.5H4.6L6 3.5H12.4Q13.5 3.5 13.5 4.6V6" fill="#f3d45e" stroke="#7d6216"/><path d="M0.7 13.5L2.7 5.5H15.5L13.2 13.5Z" fill="url(#gF)" stroke="#7d6216" stroke-linejoin="round"/></svg><span class="t b" style="left:24px;top:7px;letter-spacing:-0.172px;color:#d4d0c8;">Z2</span><div class="cb" style="left:744px;top:6px"><svg width="14" height="12" viewBox="0 0 14 12" style="position:absolute;left:0;top:0"><rect x="3" y="8" width="6" height="2" fill="#000"/></svg></div><div class="cb" style="left:760px;top:6px"><svg width="14" height="12" viewBox="0 0 14 12" style="position:absolute;left:0;top:0"><path d="M2.5 1.5h8v8h-8z" fill="none" stroke="#000" stroke-width="1"/><rect x="2" y="1" width="9" height="2" fill="#000"/></svg></div><div class="cb" style="left:778px;top:6px"><svg width="14" height="12" viewBox="0 0 14 12" style="position:absolute;left:0;top:0"><path d="M3.5 2.5l6 6M4.5 2.5l6 6M9.5 2.5l-6 6M10.5 2.5l-6 6" stroke="#000" stroke-width="1" fill="none" stroke-linecap="square"/></svg></div><div style="left:4px;top:23px;width:792px;height:1px;background:#808080"></div><div style="left:4px;top:24px;width:792px;height:1px;background:#fff"></div><div style="left:4px;top:23px;width:1px;height:73px;background:#808080"></div><div style="left:5px;top:24px;width:1px;height:71px;background:#fff"></div><div style="left:794px;top:24px;width:1px;height:71px;background:#fff"></div><div style="left:5px;top:47px;width:790px;height:1px;background:#808080"></div><div style="left:5px;top:48px;width:790px;height:1px;background:#fff"></div><div style="left:5px;top:71px;width:790px;height:1px;background:#808080"></div><div style="left:5px;top:72px;width:790px;height:1px;background:#fff"></div><div style="left:4px;top:95px;width:792px;height:1px;background:#808080"></div><span class="t" style="left:13px;top:30px;letter-spacing:-0.434px;color:#808080;"><u>F</u>ile</span><span class="t" style="left:46px;top:30px;letter-spacing:-0.492px;color:#808080;"><u>E</u>dit</span><span class="t" style="left:80px;top:30px;letter-spacing:-0.539px;color:#808080;"><u>V</u>iew</span><span class="t" style="left:117px;top:30px;letter-spacing:0.083px;color:#808080;">Fa<u>v</u>orites</span><span class="t" style="left:179px;top:30px;letter-spacing:-0.237px;color:#808080;"><u>T</u>ools</span><span class="t" style="left:219px;top:30px;letter-spacing:-0.406px;color:#808080;"><u>H</u>elp</span><div style="left:304px;top:25px;width:1px;height:22px;background:#808080"></div><div style="left:305px;top:25px;width:1px;height:22px;background:#fff"></div><span class="t" style="left:309px;top:30px;letter-spacing:-0.537px;">Links</span><svg class="i" style="left:340px;top:29px" width="16" height="16" viewBox="0 0 16 16"><path d="M0.5 3.2Q0.5 1.5 2.2 1.5H5.4Q6.3 1.5 6.9 2.3L7.8 3.5H13.8Q15.5 3.5 15.5 5.2V12Q15.5 13.7 13.8 13.7H2.2Q0.5 13.7 0.5 12Z" fill="#fdf2a4" stroke="#b08c28"/><path d="M1.5 5.5H14.5V11.8Q14.5 12.7 13.6 12.7H2.4Q1.5 12.7 1.5 11.8Z" fill="url(#gF)"/><path d="M1.2 5H14.8" stroke="#c6a23c" stroke-width="1" opacity=".85"/><path d="M15.5 5V12Q15.5 13.7 13.8 13.7H2.5" fill="none" stroke="#7d6216"/></svg><span class="t" style="left:359.5px;top:30px;letter-spacing:-0.120px;">ReportingProjects</span><svg class="i" style="left:457px;top:29px" width="16" height="16" viewBox="0 0 16 16"><path d="M0.5 3.2Q0.5 1.5 2.2 1.5H5.4Q6.3 1.5 6.9 2.3L7.8 3.5H13.8Q15.5 3.5 15.5 5.2V12Q15.5 13.7 13.8 13.7H2.2Q0.5 13.7 0.5 12Z" fill="#fdf2a4" stroke="#b08c28"/><path d="M1.5 5.5H14.5V11.8Q14.5 12.7 13.6 12.7H2.4Q1.5 12.7 1.5 11.8Z" fill="url(#gF)"/><path d="M1.2 5H14.8" stroke="#c6a23c" stroke-width="1" opacity=".85"/><path d="M15.5 5V12Q15.5 13.7 13.8 13.7H2.5" fill="none" stroke="#7d6216"/></svg><span class="t" style="left:476.5px;top:30px;letter-spacing:-0.453px;">BI</span><svg class="i" style="left:498px;top:29px" width="16" height="16" viewBox="0 0 16 16"><path d="M0.5 3.2Q0.5 1.5 2.2 1.5H5.4Q6.3 1.5 6.9 2.3L7.8 3.5H13.8Q15.5 3.5 15.5 5.2V12Q15.5 13.7 13.8 13.7H2.2Q0.5 13.7 0.5 12Z" fill="#fdf2a4" stroke="#b08c28"/><path d="M1.5 5.5H14.5V11.8Q14.5 12.7 13.6 12.7H2.4Q1.5 12.7 1.5 11.8Z" fill="url(#gF)"/><path d="M1.2 5H14.8" stroke="#c6a23c" stroke-width="1" opacity=".85"/><path d="M15.5 5V12Q15.5 13.7 13.8 13.7H2.5" fill="none" stroke="#7d6216"/></svg><span class="t" style="left:517.5px;top:30px;letter-spacing:-0.094px;">Projects</span><svg class="i" style="left:568px;top:29px" width="16" height="16" viewBox="0 0 16 16"><path d="M0.5 3.2Q0.5 1.5 2.2 1.5H5.4Q6.3 1.5 6.9 2.3L7.8 3.5H13.8Q15.5 3.5 15.5 5.2V12Q15.5 13.7 13.8 13.7H2.2Q0.5 13.7 0.5 12Z" fill="#fdf2a4" stroke="#b08c28"/><path d="M1.5 5.5H14.5V11.8Q14.5 12.7 13.6 12.7H2.4Q1.5 12.7 1.5 11.8Z" fill="url(#gF)"/><path d="M1.2 5H14.8" stroke="#c6a23c" stroke-width="1" opacity=".85"/><path d="M15.5 5V12Q15.5 13.7 13.8 13.7H2.5" fill="none" stroke="#7d6216"/></svg><span class="t" style="left:587.5px;top:30px;letter-spacing:-0.071px;">ReportServers</span><div style="left:756px;top:24px;width:39px;height:23px;background:#fff"></div><div style="left:754px;top:25px;width:1px;height:22px;background:#808080"></div><div style="left:755px;top:25px;width:1px;height:22px;background:#fff"></div><svg class="i" style="left:764px;top:27px" width="22" height="18" viewBox="0 0 22 18"><path d="M4.2 2.4Q7.4 0.2 10.8 2L9.4 8.4Q6.2 6.8 2.8 8.8Z" fill="#ea5428"/><path d="M11.8 2.6Q15.2 4.6 19.4 2.4L18 9Q14 11.2 10.4 9Z" fill="#6cb82e"/><path d="M2.6 9.8Q5.8 7.8 9.2 9.4L7.8 15.8Q4.4 14.2 1.2 16.2Z" fill="#3c8ee4"/><path d="M10.2 10Q13.6 12.2 17.8 10L16.4 16.4Q12.4 18.6 8.8 16.4Z" fill="#f6ba1e"/></svg><svg class="i" style="left:8px;top:52px" width="17" height="17" viewBox="0 0 17 17"><circle cx="8.5" cy="8.5" r="7" fill="url(#gC)" stroke="#9a9a9a"/><circle cx="8.5" cy="8.5" r="6" fill="none" stroke="#e6e6e6" stroke-width=".6" opacity=".3"/><path d="M3.6 8.5L8.4 3.9V6.9H13V10.1H8.4V13.1Z" fill="#fff"/></svg><span class="t sh" style="left:28.3px;top:54px;letter-spacing:-0.617px;color:#808080;">Back</span><svg class="i" style="left:60px;top:59px" width="7" height="5" viewBox="0 0 7 5"><path d="M1 1h5l-2.5 3z" fill="#fff"/><path d="M0 0h5l-2.5 3z" fill="#808080"/></svg><svg class="i" style="left:72px;top:52px" width="17" height="17" viewBox="0 0 17 17"><circle cx="8.5" cy="8.5" r="7" fill="url(#gC)" stroke="#9a9a9a"/><circle cx="8.5" cy="8.5" r="6" fill="none" stroke="#e6e6e6" stroke-width=".6" opacity=".3"/><path d="M13.4 8.5L8.6 3.9V6.9H4V10.1H8.6V13.1Z" fill="#fff"/></svg><svg class="i" style="left:97px;top:59px" width="7" height="5" viewBox="0 0 7 5"><path d="M1 1h5l-2.5 3z" fill="#fff"/><path d="M0 0h5l-2.5 3z" fill="#808080"/></svg><svg class="i" style="left:110px;top:52px" width="17" height="17" viewBox="0 0 17 17"><path d="M0.8 7.2Q0.8 6 2 6H3.8L4.8 7.2H8.4Q9.4 7.2 9.4 8.2V13.4Q9.4 14.6 8.2 14.6H2Q0.8 14.6 0.8 13.4Z" fill="#f8e27c" stroke="#c8a83a" stroke-width=".8"/><path d="M10 0.6L14.6 5.4H12.2Q12.2 10.5 8.6 13.8L6.6 12.2Q8.6 9.5 8.2 5.4H5.4Z" fill="#30b530" stroke="#127a1e" stroke-width=".9" stroke-linejoin="round"/><path d="M10 2.2L8 4.4M10.2 5Q10.4 9 8.4 12" stroke="#8fe88f" stroke-width=".8" fill="none" opacity=".8"/></svg><div style="left:132px;top:51px;width:1px;height:18px;background:#808080"></div><div style="left:133px;top:51px;width:1px;height:18px;background:#fff"></div><svg class="i" style="left:138px;top:52px" width="17" height="17" viewBox="0 0 17 17"><path d="M7.2 8.8L2 14" stroke="#c88a5c" stroke-width="2.2" stroke-linecap="round"/><path d="M7.4 8.2L5.4 10.2" stroke="#b0b0b8" stroke-width="2"/><circle cx="11" cy="5.2" r="4.5" fill="#d4eafa" stroke="#8fb2d4" stroke-width="1.1"/><path d="M8.4 4.6Q9.2 2.4 11.6 2.4" stroke="#fff" stroke-width="1.2" fill="none"/></svg><span class="t" style="left:158.5px;top:54px;letter-spacing:-0.360px;">Search</span><svg class="i" style="left:202px;top:52px" width="17" height="16" viewBox="0 0 17 16"><path d="M1.5 13.5V3.6Q1.5 2.5 2.6 2.5H5.8L7.3 4.5H12.5Q13.5 4.5 13.5 5.5V7" fill="#f3e18c" stroke="#cdb458"/><path d="M1.6 13.5L4.4 7H15.8L12.8 13.5Z" fill="#fdf4b4" stroke="#cdb458" stroke-linejoin="round"/></svg><span class="t" style="left:222.5px;top:54px;letter-spacing:-0.270px;">Folders</span><div style="left:268px;top:51px;width:1px;height:18px;background:#808080"></div><div style="left:269px;top:51px;width:1px;height:18px;background:#fff"></div><svg class="i" style="left:276px;top:52px" width="17" height="16" viewBox="0 0 17 16"><rect x="1.5" y="1.5" width="14" height="13" fill="#fff" stroke="#2b60c6"/><rect x="1" y="1" width="15" height="3.6" fill="#3c78de"/><rect x="1" y="1" width="15" height="1" fill="#6c9cec"/><rect x="3.6" y="6.2" width="2.4" height="2.4" fill="#9c8cb4"/><rect x="7.4" y="6.2" width="2.4" height="2.4" fill="#1a3e96"/><rect x="11.2" y="6.2" width="2.4" height="2.4" fill="#2c8c3c"/><rect x="3.6" y="10.2" width="2.4" height="2.4" fill="#d4704c"/><rect x="7.4" y="10.2" width="2.4" height="2.4" fill="#10368c"/><rect x="11.2" y="10.2" width="2.4" height="2.4" fill="#b4a03c"/></svg><svg class="i" style="left:294px;top:59px" width="6" height="4" viewBox="0 0 6 4"><path d="M0 0h5l-2.5 3z" fill="#000"/></svg><span class="t" style="left:10px;top:78px;letter-spacing:-0.337px;">A<u>d</u>dress</span><div class="combo" style="left:53px;top:73px;width:684px;height:22px;"></div><svg class="i" style="left:56px;top:76px" width="16" height="16" viewBox="0 0 16 16"><path d="M0.5 3.2Q0.5 1.5 2.2 1.5H5.4Q6.3 1.5 6.9 2.3L7.8 3.5H13.8Q15.5 3.5 15.5 5.2V12Q15.5 13.7 13.8 13.7H2.2Q0.5 13.7 0.5 12Z" fill="#fdf2a4" stroke="#b08c28"/><path d="M1.5 5.5H14.5V11.8Q14.5 12.7 13.6 12.7H2.4Q1.5 12.7 1.5 11.8Z" fill="url(#gF)"/><path d="M1.2 5H14.8" stroke="#c6a23c" stroke-width="1" opacity=".85"/><path d="M15.5 5V12Q15.5 13.7 13.8 13.7H2.5" fill="none" stroke="#7d6216"/></svg><span class="t" style="left:75.5px;top:78px;letter-spacing:-0.224px;">C:\TEMP\ZipTest\Z2</span><div class="ddb" style="left:719px;top:75px"><svg width="16" height="18" viewBox="0 0 16 18" style="position:absolute;left:-1px;top:-1px"><path d="M4 7h7l-3.5 4z" fill="#000"/></svg></div><svg class="i" style="left:743px;top:75px" width="18" height="18" viewBox="0 0 18 18"><rect x="0.5" y="0.5" width="17" height="17" rx="1.8" fill="url(#gG)" stroke="#a4dca4"/><path d="M3.6 9H13M9.4 4.8L13.6 9L9.4 13.2" fill="none" stroke="#fff" stroke-width="2.1" stroke-linejoin="miter"/></svg><span class="t" style="left:766px;top:78px;letter-spacing:-1.094px;">Go</span><div style="left:4px;top:96px;width:792px;height:480px;background:#fff"></div><div style="left:16px;top:109px;width:186px;height:23px;background:#d4d0c8"></div><span class="t b" style="left:28px;top:116px;letter-spacing:0.235px;">File and Folder Tasks</span><svg class="i" style="left:182px;top:115px" width="10" height="11" viewBox="0 0 10 11"><path d="M1.5 5L5 1.5L8.5 5M1.5 9.5L5 6L8.5 9.5" fill="none" stroke="#000" stroke-width="1.6"/></svg><div style="left:16px;top:132px;width:186px;height:157px;border:1px solid #d4d0c8;border-top:0;background:#fff"></div><svg class="i" style="left:29px;top:142px" width="16" height="16" viewBox="0 0 16 16"><rect x="0.6" y="3.6" width="11" height="8.8" fill="#fff" stroke="#6c7cba" stroke-width="1.1"/><rect x="2.2" y="5.4" width="7.4" height="5.2" fill="#1030b4"/><rect x="2.2" y="5.4" width="7.4" height="5.2" fill="none" stroke="#5c74d4" stroke-width=".7"/><path d="M11.6 1.4V14.6H14V1.4Z" fill="#e2e6f8" stroke="#7c84c6" stroke-width=".9"/><path d="M9.6 0.9H16M9.6 15.1H16" stroke="#7c84c6" stroke-width="1.5" fill="none"/><path d="M12.8 0.4V1.6M12.8 14.4V15.6" stroke="#e2e6f8" stroke-width="1"/></svg><span class="t" style="left:51.5px;top:143px;letter-spacing:-0.180px;">Rename this file</span><svg class="i" style="left:29px;top:162px" width="16" height="16" viewBox="0 0 16 16"><path d="M1.5 6Q1.5 4.5 3 4.5H6L7 5.5H12.5Q13.8 5.5 13.8 6.8V12.5Q13.8 14 12.4 14H3Q1.5 14 1.5 12.6Z" fill="#f6d96c" stroke="#b8962e" stroke-width=".9"/><ellipse cx="5.4" cy="3.2" rx="3.8" ry="2.6" fill="#dfe8f6" stroke="#a8b8d4" stroke-width=".7"/><path d="M2.4 4.6L8.6 4.6L9.4 7.4H2Z" fill="#eef2fa" opacity=".9"/><path d="M5.6 9.4H9.6V6.8L14.6 10.8L9.6 14.8V12.4H5.6Z" fill="#3cba3c" stroke="#15741f" stroke-width=".9" stroke-linejoin="round"/></svg><span class="t" style="left:51.5px;top:163px;letter-spacing:-0.050px;">Move this file</span><svg class="i" style="left:29px;top:182px" width="16" height="16" viewBox="0 0 16 16"><path d="M1.5 0.6H9.5V11.5H1.5Z" fill="#fff" stroke="#8a8e9e" stroke-width=".9"/><path d="M2.6 3H4M2.6 5H4M2.6 7H4M2.6 9H4" stroke="#b0b4c4" stroke-width=".7"/><path d="M4.5 3.5H10.5L13.6 6.6V15.5H4.5Z" fill="#e6f1ff" stroke="#2c4c8e"/><path d="M10.5 3.5V6.6H13.6" fill="#b8cef0" stroke="#2c4c8e" stroke-width=".8"/><path d="M6.2 8.2H12M6.2 10.2H12M6.2 12.2H12M6.2 14H10" stroke="#7ca4dc" stroke-width=".9"/></svg><span class="t" style="left:51.5px;top:183px;letter-spacing:-0.035px;">Copy this file</span><svg class="i" style="left:29px;top:202px" width="16" height="16" viewBox="0 0 16 16"><circle cx="8" cy="8" r="7.5" fill="url(#gE)" stroke="#0d3f8e" stroke-width=".5"/><path d="M3.875 2.75q3.75 -2.625 6.75 -0.375q-0.75 3.75 -3.375 4.125q-3.75 2.25 -5.625 1.125q-0.75 -3.0 2.25 -4.875z" fill="#2f9e3e"/><path d="M10.625 8.375q3.0 -0.75 4.125 1.5q-1.5 3.75 -4.5 4.5q-1.5 -3.0 0.375 -6.0z" fill="#2f9e3e"/><path d="M8 5.2L13.4 10.8H10.6V15.2H5.4V10.8H2.6Z" fill="#34c234" stroke="#0c6a1c" stroke-width=".9" stroke-linejoin="round"/><path d="M8 6.2L4.2 10.2M8 6.2L11.8 10.2" stroke="#b4f4a0" stroke-width=".8" fill="none"/></svg><span class="t" style="left:51.5px;top:203px;letter-spacing:-0.086px;">Publish this file to the Web</span><svg class="i" style="left:29px;top:222px" width="16" height="16" viewBox="0 0 16 16"><path d="M1 8L8 2.2L15 6.8V13.6L1 15.6Z" fill="#98ace6" stroke="#6278c4" stroke-width=".8" stroke-linejoin="round"/><path d="M4 7Q8 1.6 12.2 5.8V9.5H4Z" fill="#f4e8b4" stroke="#cbb66e" stroke-width=".5"/><path d="M1 8L8 11.8L15 6.8V13.6L1 15.6Z" fill="#d8e4fc" stroke="#7c90d4" stroke-width=".7" stroke-linejoin="round"/><path d="M1 15.6L8 11.8L15 13.6" stroke="#8ea2dc" fill="none" stroke-width=".7"/></svg><span class="t" style="left:51.5px;top:223px;letter-spacing:-0.173px;">E-mail this file</span><svg class="i" style="left:29px;top:242px" width="16" height="16" viewBox="0 0 16 16"><path d="M4.6 0.8H10.6L12 7.4H3.4Z" fill="#e8eef8" stroke="#a4acc0" stroke-width=".8"/><path d="M5.4 2.6H9.8M5.2 4.4H10.2" stroke="#c0c8dc" stroke-width=".6"/><path d="M1.2 8.6Q1.2 6.8 3.4 6.8H12.6Q14.8 6.8 14.8 8.6V11.8H1.2Z" fill="#dcdcdc" stroke="#8a8a8a" stroke-width=".8"/><path d="M2.6 11.4H13.4V14.6H2.6Z" fill="#f6f6f6" stroke="#909090" stroke-width=".8"/><path d="M3 12.6H13" stroke="#555" stroke-width="1"/><path d="M2 9.2H14" stroke="#fff" stroke-width=".8"/></svg><span class="t" style="left:51.5px;top:243px;letter-spacing:-0.015px;">Print this file</span><svg class="i" style="left:29px;top:262px" width="16" height="16" viewBox="0 0 16 16"><path d="M2 2.4Q7 7 13.6 14.6M13.2 1.8Q8 7.5 2.4 15" stroke="#c4102c" stroke-width="2.3" fill="none" stroke-linecap="round"/></svg><span class="t" style="left:51.5px;top:263px;letter-spacing:-0.025px;">Delete this file</span><div style="left:16px;top:304px;width:186px;height:23px;background:#d4d0c8"></div><span class="t b" style="left:28px;top:311px;letter-spacing:0.270px;">Other Places</span><svg class="i" style="left:182px;top:310px" width="10" height="11" viewBox="0 0 10 11"><path d="M1.5 5L5 1.5L8.5 5M1.5 9.5L5 6L8.5 9.5" fill="none" stroke="#000" stroke-width="1.6"/></svg><div style="left:16px;top:327px;width:186px;height:97px;border:1px solid #d4d0c8;border-top:0;background:#fff"></div><svg class="i" style="left:29px;top:338px" width="16" height="16" viewBox="0 0 16 16"><path d="M0.5 3.2Q0.5 1.5 2.2 1.5H5.4Q6.3 1.5 6.9 2.3L7.8 3.5H13.8Q15.5 3.5 15.5 5.2V12Q15.5 13.7 13.8 13.7H2.2Q0.5 13.7 0.5 12Z" fill="#fdf2a4" stroke="#b08c28"/><path d="M1.5 5.5H14.5V11.8Q14.5 12.7 13.6 12.7H2.4Q1.5 12.7 1.5 11.8Z" fill="url(#gF)"/><path d="M1.2 5H14.8" stroke="#c6a23c" stroke-width="1" opacity=".85"/><path d="M15.5 5V12Q15.5 13.7 13.8 13.7H2.5" fill="none" stroke="#7d6216"/></svg><span class="t" style="left:51.5px;top:338px;letter-spacing:-0.138px;">ZipTest</span><svg class="i" style="left:29px;top:357px" width="16" height="16" viewBox="0 0 16 16"><g transform="translate(-1.2 0.6) scale(1.15 1)"><path d="M1.5 5Q1.5 3.6 3 3.6H5V13.5H3.2Q1.5 13.5 1.5 11.8Z" fill="#fdf2a4" stroke="#b08c28"/><path d="M4.5 0.6H12.5V9H4.5Z" fill="#eef5ff" stroke="#5a86c8" stroke-width=".9"/><path d="M4.5 0.6H12.5V2.4H4.5Z" fill="#6ea2e6"/><path d="M6 4H11M6 5.8H11" stroke="#8fb0e0" stroke-width=".8"/><path d="M1.5 7.5H14.5V11.8Q14.5 13.5 12.8 13.5H3.2Q1.5 13.5 1.5 11.8Z" fill="url(#gF)" stroke="#a08020"/><path d="M5 9H11V11.4H5Z" fill="#f4f4ee" stroke="#b8a860" stroke-width=".6"/></g></svg><span class="t" style="left:51.5px;top:358px;letter-spacing:-0.322px;">My Documents</span><svg class="i" style="left:29px;top:377px" width="16" height="16" viewBox="0 0 16 16"><g transform="translate(2 0.6)"><path d="M2.6 1L11 0.2L10.4 8.6L2.2 8.2Z" fill="url(#gM)" stroke="#5a94d8" stroke-width=".8" stroke-linejoin="round"/><path d="M5.6 8.4H8.2L8.6 11.4H5Z" fill="#4c74cc"/><ellipse cx="6.8" cy="12.8" rx="4.4" ry="2.2" fill="#d0d0e6" stroke="#9c9cc4" stroke-width=".7"/><path d="M3.4 12.2Q6.8 10.8 10.2 12.2" stroke="#fff" stroke-width=".8" fill="none"/></g></svg><span class="t" style="left:51.5px;top:378px;letter-spacing:-0.276px;">My Computer</span><svg class="i" style="left:29px;top:397px" width="16" height="16" viewBox="0 0 16 16"><circle cx="4.8" cy="5.6" r="4.6" fill="url(#gE)" stroke="#0d3f8e" stroke-width=".5"/><path d="M2.27 2.38q2.3 -1.6099999999999999 4.14 -0.22999999999999998q-0.45999999999999996 2.3 -2.07 2.53q-2.3 1.38 -3.4499999999999997 0.69q-0.45999999999999996 -1.8399999999999999 1.38 -2.9899999999999998z" fill="#2f9e3e"/><path d="M6.41 5.83q1.8399999999999999 -0.45999999999999996 2.53 0.9199999999999999q-0.9199999999999999 2.3 -2.76 2.76q-0.9199999999999999 -1.8399999999999999 0.22999999999999998 -3.6799999999999997z" fill="#2f9e3e"/><g transform="translate(4.4 0.8)"><path d="M2.6 1L11 0.2L10.4 8.6L2.2 8.2Z" fill="url(#gM)" stroke="#5a94d8" stroke-width=".8" stroke-linejoin="round"/><path d="M5.6 8.4H8.2L8.6 11.4H5Z" fill="#4c74cc"/><ellipse cx="6.8" cy="12.8" rx="4.4" ry="2.2" fill="#d0d0e6" stroke="#9c9cc4" stroke-width=".7"/><path d="M3.4 12.2Q6.8 10.8 10.2 12.2" stroke="#fff" stroke-width=".8" fill="none"/></g></svg><span class="t" style="left:51.5px;top:398px;letter-spacing:-0.279px;">My Network Places</span><div style="left:16px;top:439px;width:186px;height:23px;background:#d4d0c8"></div><span class="t b" style="left:28px;top:446px;letter-spacing:0.346px;">Details</span><svg class="i" style="left:182px;top:445px" width="10" height="11" viewBox="0 0 10 11"><path d="M1.5 1.5L5 5L8.5 1.5M1.5 6L5 9.5L8.5 6" fill="none" stroke="#000" stroke-width="1.6"/></svg><div class="lh" style="left:215px;top:97px;width:178px;height:17px;"></div><span class="t" style="left:219.5px;top:100px;letter-spacing:-0.836px;">Name</span><div class="lh" style="left:393px;top:97px;width:97px;height:17px;"></div><span class="t" style="left:463px;top:100px;letter-spacing:-0.602px;">Size</span><div class="lh" style="left:490px;top:97px;width:120px;height:17px;"></div><span class="t" style="left:494.5px;top:100px;letter-spacing:0.035px;">Type</span><svg class="i" style="left:531px;top:103px" width="8" height="5"><path d="M0 4.5L4 0L8 4.5z" fill="#a29e92"/></svg><div class="lh" style="left:610px;top:97px;width:120px;height:17px;"></div><span class="t" style="left:614.5px;top:100px;letter-spacing:-0.067px;">Date Modified</span><div class="lh" style="left:730px;top:97px;width:66px;height:17px;border-right:0;box-shadow:inset 0 -1px 0 #808080"></div><div style="left:490px;top:114px;width:120px;height:462px;background:#f7f7f7"></div><div style="left:234px;top:115px;width:88px;height:17px;background:#d4d0c8"></div><svg class="i" style="left:218px;top:115px" width="16" height="16" viewBox="0 0 16 16"><rect x="2.5" y="2.2" width="10" height="12.3" rx="1.2" fill="#fff" stroke="#7e8ec8"/><path d="M12.5 4V13.5Q12.5 14.5 11.5 14.5H4" stroke="#5c6cb0" fill="none"/><path d="M4.2 0.8V3.2M6.2 0.8V3.2M8.2 0.8V3.2M10.2 0.8V3.2" stroke="#6a5828" stroke-width="1"/><path d="M3 3H12" stroke="#d8c890" stroke-width=".8"/><path d="M5 5.5H10M5 7.5H10M5 9.5H10M5 11.5H8" stroke="#5c88dc" stroke-width="1"/></svg><span class="t" style="left:235.5px;top:117px;letter-spacing:-0.035px;">DemoForPaul.txt</span><span class="t" style="left:460px;top:117px;letter-spacing:-0.215px;">1 KB</span><span class="t" style="left:495px;top:117px;letter-spacing:-0.029px;">Text Document</span><span class="t" style="left:615px;top:117px;letter-spacing:0.064px;">10/18/2011 10:48 AM</span><div class="sb" style="left:4px;top:578px;width:780px;height:18px;"></div><span class="t" style="left:6px;top:581px;letter-spacing:0.012px;">Type: Text Document Date Modified: 10/18/2011 10:48 AM Size: 18 bytes</span></div><div class="win" style="left:290px;top:212px"><div class="win2"></div><div style="left:4px;top:4px;width:792px;height:18px;background:linear-gradient(90deg,#808080,#c0c0c0)"></div><svg class="i" style="left:6px;top:5px" width="16" height="16" viewBox="0 0 16 16"><path d="M0.5 12.5V2.6Q0.5 1.5 1.6 1.5H4.6L6 3.5H12.4Q13.5 3.5 13.5 4.6V6" fill="#f3d45e" stroke="#7d6216"/><path d="M0.7 13.5L2.7 5.5H15.5L13.2 13.5Z" fill="url(#gF)" stroke="#7d6216" stroke-linejoin="round"/></svg><span class="t b" style="left:24px;top:7px;letter-spacing:-0.172px;color:#d4d0c8;">Z3</span><div class="cb" style="left:744px;top:6px"><svg width="14" height="12" viewBox="0 0 14 12" style="position:absolute;left:0;top:0"><rect x="3" y="8" width="6" height="2" fill="#000"/></svg></div><div class="cb" style="left:760px;top:6px"><svg width="14" height="12" viewBox="0 0 14 12" style="position:absolute;left:0;top:0"><path d="M2.5 1.5h8v8h-8z" fill="none" stroke="#000" stroke-width="1"/><rect x="2" y="1" width="9" height="2" fill="#000"/></svg></div><div class="cb" style="left:778px;top:6px"><svg width="14" height="12" viewBox="0 0 14 12" style="position:absolute;left:0;top:0"><path d="M3.5 2.5l6 6M4.5 2.5l6 6M9.5 2.5l-6 6M10.5 2.5l-6 6" stroke="#000" stroke-width="1" fill="none" stroke-linecap="square"/></svg></div><div style="left:4px;top:23px;width:792px;height:1px;background:#808080"></div><div style="left:4px;top:24px;width:792px;height:1px;background:#fff"></div><div style="left:4px;top:23px;width:1px;height:73px;background:#808080"></div><div style="left:5px;top:24px;width:1px;height:71px;background:#fff"></div><div style="left:794px;top:24px;width:1px;height:71px;background:#fff"></div><div style="left:5px;top:47px;width:790px;height:1px;background:#808080"></div><div style="left:5px;top:48px;width:790px;height:1px;background:#fff"></div><div style="left:5px;top:71px;width:790px;height:1px;background:#808080"></div><div style="left:5px;top:72px;width:790px;height:1px;background:#fff"></div><div style="left:4px;top:95px;width:792px;height:1px;background:#808080"></div><span class="t" style="left:13px;top:30px;letter-spacing:-0.434px;color:#808080;"><u>F</u>ile</span><span class="t" style="left:46px;top:30px;letter-spacing:-0.492px;color:#808080;"><u>E</u>dit</span><span class="t" style="left:80px;top:30px;letter-spacing:-0.539px;color:#808080;"><u>V</u>iew</span><span class="t" style="left:117px;top:30px;letter-spacing:0.083px;color:#808080;">Fa<u>v</u>orites</span><span class="t" style="left:179px;top:30px;letter-spacing:-0.237px;color:#808080;"><u>T</u>ools</span><span class="t" style="left:219px;top:30px;letter-spacing:-0.406px;color:#808080;"><u>H</u>elp</span><div style="left:304px;top:25px;width:1px;height:22px;background:#808080"></div><div style="left:305px;top:25px;width:1px;height:22px;background:#fff"></div><span class="t" style="left:309px;top:30px;letter-spacing:-0.537px;">Links</span><svg class="i" style="left:340px;top:29px" width="16" height="16" viewBox="0 0 16 16"><path d="M0.5 3.2Q0.5 1.5 2.2 1.5H5.4Q6.3 1.5 6.9 2.3L7.8 3.5H13.8Q15.5 3.5 15.5 5.2V12Q15.5 13.7 13.8 13.7H2.2Q0.5 13.7 0.5 12Z" fill="#fdf2a4" stroke="#b08c28"/><path d="M1.5 5.5H14.5V11.8Q14.5 12.7 13.6 12.7H2.4Q1.5 12.7 1.5 11.8Z" fill="url(#gF)"/><path d="M1.2 5H14.8" stroke="#c6a23c" stroke-width="1" opacity=".85"/><path d="M15.5 5V12Q15.5 13.7 13.8 13.7H2.5" fill="none" stroke="#7d6216"/></svg><span class="t" style="left:359.5px;top:30px;letter-spacing:-0.120px;">ReportingProjects</span><svg class="i" style="left:457px;top:29px" width="16" height="16" viewBox="0 0 16 16"><path d="M0.5 3.2Q0.5 1.5 2.2 1.5H5.4Q6.3 1.5 6.9 2.3L7.8 3.5H13.8Q15.5 3.5 15.5 5.2V12Q15.5 13.7 13.8 13.7H2.2Q0.5 13.7 0.5 12Z" fill="#fdf2a4" stroke="#b08c28"/><path d="M1.5 5.5H14.5V11.8Q14.5 12.7 13.6 12.7H2.4Q1.5 12.7 1.5 11.8Z" fill="url(#gF)"/><path d="M1.2 5H14.8" stroke="#c6a23c" stroke-width="1" opacity=".85"/><path d="M15.5 5V12Q15.5 13.7 13.8 13.7H2.5" fill="none" stroke="#7d6216"/></svg><span class="t" style="left:476.5px;top:30px;letter-spacing:-0.453px;">BI</span><svg class="i" style="left:498px;top:29px" width="16" height="16" viewBox="0 0 16 16"><path d="M0.5 3.2Q0.5 1.5 2.2 1.5H5.4Q6.3 1.5 6.9 2.3L7.8 3.5H13.8Q15.5 3.5 15.5 5.2V12Q15.5 13.7 13.8 13.7H2.2Q0.5 13.7 0.5 12Z" fill="#fdf2a4" stroke="#b08c28"/><path d="M1.5 5.5H14.5V11.8Q14.5 12.7 13.6 12.7H2.4Q1.5 12.7 1.5 11.8Z" fill="url(#gF)"/><path d="M1.2 5H14.8" stroke="#c6a23c" stroke-width="1" opacity=".85"/><path d="M15.5 5V12Q15.5 13.7 13.8 13.7H2.5" fill="none" stroke="#7d6216"/></svg><span class="t" style="left:517.5px;top:30px;letter-spacing:-0.094px;">Projects</span><svg class="i" style="left:568px;top:29px" width="16" height="16" viewBox="0 0 16 16"><path d="M0.5 3.2Q0.5 1.5 2.2 1.5H5.4Q6.3 1.5 6.9 2.3L7.8 3.5H13.8Q15.5 3.5 15.5 5.2V12Q15.5 13.7 13.8 13.7H2.2Q0.5 13.7 0.5 12Z" fill="#fdf2a4" stroke="#b08c28"/><path d="M1.5 5.5H14.5V11.8Q14.5 12.7 13.6 12.7H2.4Q1.5 12.7 1.5 11.8Z" fill="url(#gF)"/><path d="M1.2 5H14.8" stroke="#c6a23c" stroke-width="1" opacity=".85"/><path d="M15.5 5V12Q15.5 13.7 13.8 13.7H2.5" fill="none" stroke="#7d6216"/></svg><span class="t" style="left:587.5px;top:30px;letter-spacing:-0.071px;">ReportServers</span><div style="left:756px;top:24px;width:39px;height:23px;background:#fff"></div><div style="left:754px;top:25px;width:1px;height:22px;background:#808080"></div><div style="left:755px;top:25px;width:1px;height:22px;background:#fff"></div><svg class="i" style="left:764px;top:27px" width="22" height="18" viewBox="0 0 22 18"><path d="M4.2 2.4Q7.4 0.2 10.8 2L9.4 8.4Q6.2 6.8 2.8 8.8Z" fill="#ea5428"/><path d="M11.8 2.6Q15.2 4.6 19.4 2.4L18 9Q14 11.2 10.4 9Z" fill="#6cb82e"/><path d="M2.6 9.8Q5.8 7.8 9.2 9.4L7.8 15.8Q4.4 14.2 1.2 16.2Z" fill="#3c8ee4"/><path d="M10.2 10Q13.6 12.2 17.8 10L16.4 16.4Q12.4 18.6 8.8 16.4Z" fill="#f6ba1e"/></svg><svg class="i" style="left:8px;top:52px" width="17" height="17" viewBox="0 0 17 17"><circle cx="8.5" cy="8.5" r="7" fill="url(#gC)" stroke="#9a9a9a"/><circle cx="8.5" cy="8.5" r="6" fill="none" stroke="#e6e6e6" stroke-width=".6" opacity=".3"/><path d="M3.6 8.5L8.4 3.9V6.9H13V10.1H8.4V13.1Z" fill="#fff"/></svg><span class="t sh" style="left:28.3px;top:54px;letter-spacing:-0.617px;color:#808080;">Back</span><svg class="i" style="left:60px;top:59px" width="7" height="5" viewBox="0 0 7 5"><path d="M1 1h5l-2.5 3z" fill="#fff"/><path d="M0 0h5l-2.5 3z" fill="#808080"/></svg><svg class="i" style="left:72px;top:52px" width="17" height="17" viewBox="0 0 17 17"><circle cx="8.5" cy="8.5" r="7" fill="url(#gC)" stroke="#9a9a9a"/><circle cx="8.5" cy="8.5" r="6" fill="none" stroke="#e6e6e6" stroke-width=".6" opacity=".3"/><path d="M13.4 8.5L8.6 3.9V6.9H4V10.1H8.6V13.1Z" fill="#fff"/></svg><svg class="i" style="left:97px;top:59px" width="7" height="5" viewBox="0 0 7 5"><path d="M1 1h5l-2.5 3z" fill="#fff"/><path d="M0 0h5l-2.5 3z" fill="#808080"/></svg><svg class="i" style="left:110px;top:52px" width="17" height="17" viewBox="0 0 17 17"><path d="M0.8 7.2Q0.8 6 2 6H3.8L4.8 7.2H8.4Q9.4 7.2 9.4 8.2V13.4Q9.4 14.6 8.2 14.6H2Q0.8 14.6 0.8 13.4Z" fill="#f8e27c" stroke="#c8a83a" stroke-width=".8"/><path d="M10 0.6L14.6 5.4H12.2Q12.2 10.5 8.6 13.8L6.6 12.2Q8.6 9.5 8.2 5.4H5.4Z" fill="#30b530" stroke="#127a1e" stroke-width=".9" stroke-linejoin="round"/><path d="M10 2.2L8 4.4M10.2 5Q10.4 9 8.4 12" stroke="#8fe88f" stroke-width=".8" fill="none" opacity=".8"/></svg><div style="left:132px;top:51px;width:1px;height:18px;background:#808080"></div><div style="left:133px;top:51px;width:1px;height:18px;background:#fff"></div><svg class="i" style="left:138px;top:52px" width="17" height="17" viewBox="0 0 17 17"><path d="M7.2 8.8L2 14" stroke="#c88a5c" stroke-width="2.2" stroke-linecap="round"/><path d="M7.4 8.2L5.4 10.2" stroke="#b0b0b8" stroke-width="2"/><circle cx="11" cy="5.2" r="4.5" fill="#d4eafa" stroke="#8fb2d4" stroke-width="1.1"/><path d="M8.4 4.6Q9.2 2.4 11.6 2.4" stroke="#fff" stroke-width="1.2" fill="none"/></svg><span class="t" style="left:158.5px;top:54px;letter-spacing:-0.360px;">Search</span><svg class="i" style="left:202px;top:52px" width="17" height="16" viewBox="0 0 17 16"><path d="M1.5 13.5V3.6Q1.5 2.5 2.6 2.5H5.8L7.3 4.5H12.5Q13.5 4.5 13.5 5.5V7" fill="#f3e18c" stroke="#cdb458"/><path d="M1.6 13.5L4.4 7H15.8L12.8 13.5Z" fill="#fdf4b4" stroke="#cdb458" stroke-linejoin="round"/></svg><span class="t" style="left:222.5px;top:54px;letter-spacing:-0.270px;">Folders</span><div style="left:268px;top:51px;width:1px;height:18px;background:#808080"></div><div style="left:269px;top:51px;width:1px;height:18px;background:#fff"></div><svg class="i" style="left:276px;top:52px" width="17" height="16" viewBox="0 0 17 16"><rect x="1.5" y="1.5" width="14" height="13" fill="#fff" stroke="#2b60c6"/><rect x="1" y="1" width="15" height="3.6" fill="#3c78de"/><rect x="1" y="1" width="15" height="1" fill="#6c9cec"/><rect x="3.6" y="6.2" width="2.4" height="2.4" fill="#9c8cb4"/><rect x="7.4" y="6.2" width="2.4" height="2.4" fill="#1a3e96"/><rect x="11.2" y="6.2" width="2.4" height="2.4" fill="#2c8c3c"/><rect x="3.6" y="10.2" width="2.4" height="2.4" fill="#d4704c"/><rect x="7.4" y="10.2" width="2.4" height="2.4" fill="#10368c"/><rect x="11.2" y="10.2" width="2.4" height="2.4" fill="#b4a03c"/></svg><svg class="i" style="left:294px;top:59px" width="6" height="4" viewBox="0 0 6 4"><path d="M0 0h5l-2.5 3z" fill="#000"/></svg><span class="t" style="left:10px;top:78px;letter-spacing:-0.337px;">A<u>d</u>dress</span><div class="combo" style="left:53px;top:73px;width:684px;height:22px;"></div><svg class="i" style="left:56px;top:76px" width="16" height="16" viewBox="0 0 16 16"><path d="M0.5 3.2Q0.5 1.5 2.2 1.5H5.4Q6.3 1.5 6.9 2.3L7.8 3.5H13.8Q15.5 3.5 15.5 5.2V12Q15.5 13.7 13.8 13.7H2.2Q0.5 13.7 0.5 12Z" fill="#fdf2a4" stroke="#b08c28"/><path d="M1.5 5.5H14.5V11.8Q14.5 12.7 13.6 12.7H2.4Q1.5 12.7 1.5 11.8Z" fill="url(#gF)"/><path d="M1.2 5H14.8" stroke="#c6a23c" stroke-width="1" opacity=".85"/><path d="M15.5 5V12Q15.5 13.7 13.8 13.7H2.5" fill="none" stroke="#7d6216"/></svg><span class="t" style="left:75.5px;top:78px;letter-spacing:-0.224px;">C:\TEMP\ZipTest\Z3</span><div class="ddb" style="left:719px;top:75px"><svg width="16" height="18" viewBox="0 0 16 18" style="position:absolute;left:-1px;top:-1px"><path d="M4 7h7l-3.5 4z" fill="#000"/></svg></div><svg class="i" style="left:743px;top:75px" width="18" height="18" viewBox="0 0 18 18"><rect x="0.5" y="0.5" width="17" height="17" rx="1.8" fill="url(#gG)" stroke="#a4dca4"/><path d="M3.6 9H13M9.4 4.8L13.6 9L9.4 13.2" fill="none" stroke="#fff" stroke-width="2.1" stroke-linejoin="miter"/></svg><span class="t" style="left:766px;top:78px;letter-spacing:-1.094px;">Go</span><div style="left:4px;top:96px;width:792px;height:480px;background:#fff"></div><div style="left:16px;top:109px;width:186px;height:23px;background:#d4d0c8"></div><span class="t b" style="left:28px;top:116px;letter-spacing:0.235px;">File and Folder Tasks</span><svg class="i" style="left:182px;top:115px" width="10" height="11" viewBox="0 0 10 11"><path d="M1.5 5L5 1.5L8.5 5M1.5 9.5L5 6L8.5 9.5" fill="none" stroke="#000" stroke-width="1.6"/></svg><div style="left:16px;top:132px;width:186px;height:157px;border:1px solid #d4d0c8;border-top:0;background:#fff"></div><svg class="i" style="left:29px;top:142px" width="16" height="16" viewBox="0 0 16 16"><rect x="0.6" y="3.6" width="11" height="8.8" fill="#fff" stroke="#6c7cba" stroke-width="1.1"/><rect x="2.2" y="5.4" width="7.4" height="5.2" fill="#1030b4"/><rect x="2.2" y="5.4" width="7.4" height="5.2" fill="none" stroke="#5c74d4" stroke-width=".7"/><path d="M11.6 1.4V14.6H14V1.4Z" fill="#e2e6f8" stroke="#7c84c6" stroke-width=".9"/><path d="M9.6 0.9H16M9.6 15.1H16" stroke="#7c84c6" stroke-width="1.5" fill="none"/><path d="M12.8 0.4V1.6M12.8 14.4V15.6" stroke="#e2e6f8" stroke-width="1"/></svg><span class="t" style="left:51.5px;top:143px;letter-spacing:-0.180px;">Rename this file</span><svg class="i" style="left:29px;top:162px" width="16" height="16" viewBox="0 0 16 16"><path d="M1.5 6Q1.5 4.5 3 4.5H6L7 5.5H12.5Q13.8 5.5 13.8 6.8V12.5Q13.8 14 12.4 14H3Q1.5 14 1.5 12.6Z" fill="#f6d96c" stroke="#b8962e" stroke-width=".9"/><ellipse cx="5.4" cy="3.2" rx="3.8" ry="2.6" fill="#dfe8f6" stroke="#a8b8d4" stroke-width=".7"/><path d="M2.4 4.6L8.6 4.6L9.4 7.4H2Z" fill="#eef2fa" opacity=".9"/><path d="M5.6 9.4H9.6V6.8L14.6 10.8L9.6 14.8V12.4H5.6Z" fill="#3cba3c" stroke="#15741f" stroke-width=".9" stroke-linejoin="round"/></svg><span class="t" style="left:51.5px;top:163px;letter-spacing:-0.050px;">Move this file</span><svg class="i" style="left:29px;top:182px" width="16" height="16" viewBox="0 0 16 16"><path d="M1.5 0.6H9.5V11.5H1.5Z" fill="#fff" stroke="#8a8e9e" stroke-width=".9"/><path d="M2.6 3H4M2.6 5H4M2.6 7H4M2.6 9H4" stroke="#b0b4c4" stroke-width=".7"/><path d="M4.5 3.5H10.5L13.6 6.6V15.5H4.5Z" fill="#e6f1ff" stroke="#2c4c8e"/><path d="M10.5 3.5V6.6H13.6" fill="#b8cef0" stroke="#2c4c8e" stroke-width=".8"/><path d="M6.2 8.2H12M6.2 10.2H12M6.2 12.2H12M6.2 14H10" stroke="#7ca4dc" stroke-width=".9"/></svg><span class="t" style="left:51.5px;top:183px;letter-spacing:-0.035px;">Copy this file</span><svg class="i" style="left:29px;top:202px" width="16" height="16" viewBox="0 0 16 16"><circle cx="8" cy="8" r="7.5" fill="url(#gE)" stroke="#0d3f8e" stroke-width=".5"/><path d="M3.875 2.75q3.75 -2.625 6.75 -0.375q-0.75 3.75 -3.375 4.125q-3.75 2.25 -5.625 1.125q-0.75 -3.0 2.25 -4.875z" fill="#2f9e3e"/><path d="M10.625 8.375q3.0 -0.75 4.125 1.5q-1.5 3.75 -4.5 4.5q-1.5 -3.0 0.375 -6.0z" fill="#2f9e3e"/><path d="M8 5.2L13.4 10.8H10.6V15.2H5.4V10.8H2.6Z" fill="#34c234" stroke="#0c6a1c" stroke-width=".9" stroke-linejoin="round"/><path d="M8 6.2L4.2 10.2M8 6.2L11.8 10.2" stroke="#b4f4a0" stroke-width=".8" fill="none"/></svg><span class="t" style="left:51.5px;top:203px;letter-spacing:-0.086px;">Publish this file to the Web</span><svg class="i" style="left:29px;top:222px" width="16" height="16" viewBox="0 0 16 16"><path d="M1 8L8 2.2L15 6.8V13.6L1 15.6Z" fill="#98ace6" stroke="#6278c4" stroke-width=".8" stroke-linejoin="round"/><path d="M4 7Q8 1.6 12.2 5.8V9.5H4Z" fill="#f4e8b4" stroke="#cbb66e" stroke-width=".5"/><path d="M1 8L8 11.8L15 6.8V13.6L1 15.6Z" fill="#d8e4fc" stroke="#7c90d4" stroke-width=".7" stroke-linejoin="round"/><path d="M1 15.6L8 11.8L15 13.6" stroke="#8ea2dc" fill="none" stroke-width=".7"/></svg><span class="t" style="left:51.5px;top:223px;letter-spacing:-0.173px;">E-mail this file</span><svg class="i" style="left:29px;top:242px" width="16" height="16" viewBox="0 0 16 16"><path d="M4.6 0.8H10.6L12 7.4H3.4Z" fill="#e8eef8" stroke="#a4acc0" stroke-width=".8"/><path d="M5.4 2.6H9.8M5.2 4.4H10.2" stroke="#c0c8dc" stroke-width=".6"/><path d="M1.2 8.6Q1.2 6.8 3.4 6.8H12.6Q14.8 6.8 14.8 8.6V11.8H1.2Z" fill="#dcdcdc" stroke="#8a8a8a" stroke-width=".8"/><path d="M2.6 11.4H13.4V14.6H2.6Z" fill="#f6f6f6" stroke="#909090" stroke-width=".8"/><path d="M3 12.6H13" stroke="#555" stroke-width="1"/><path d="M2 9.2H14" stroke="#fff" stroke-width=".8"/></svg><span class="t" style="left:51.5px;top:243px;letter-spacing:-0.015px;">Print this file</span><svg class="i" style="left:29px;top:262px" width="16" height="16" viewBox="0 0 16 16"><path d="M2 2.4Q7 7 13.6 14.6M13.2 1.8Q8 7.5 2.4 15" stroke="#c4102c" stroke-width="2.3" fill="none" stroke-linecap="round"/></svg><span class="t" style="left:51.5px;top:263px;letter-spacing:-0.025px;">Delete this file</span><div style="left:16px;top:304px;width:186px;height:23px;background:#d4d0c8"></div><span class="t b" style="left:28px;top:311px;letter-spacing:0.270px;">Other Places</span><svg class="i" style="left:182px;top:310px" width="10" height="11" viewBox="0 0 10 11"><path d="M1.5 5L5 1.5L8.5 5M1.5 9.5L5 6L8.5 9.5" fill="none" stroke="#000" stroke-width="1.6"/></svg><div style="left:16px;top:327px;width:186px;height:97px;border:1px solid #d4d0c8;border-top:0;background:#fff"></div><svg class="i" style="left:29px;top:338px" width="16" height="16" viewBox="0 0 16 16"><path d="M0.5 3.2Q0.5 1.5 2.2 1.5H5.4Q6.3 1.5 6.9 2.3L7.8 3.5H13.8Q15.5 3.5 15.5 5.2V12Q15.5 13.7 13.8 13.7H2.2Q0.5 13.7 0.5 12Z" fill="#fdf2a4" stroke="#b08c28"/><path d="M1.5 5.5H14.5V11.8Q14.5 12.7 13.6 12.7H2.4Q1.5 12.7 1.5 11.8Z" fill="url(#gF)"/><path d="M1.2 5H14.8" stroke="#c6a23c" stroke-width="1" opacity=".85"/><path d="M15.5 5V12Q15.5 13.7 13.8 13.7H2.5" fill="none" stroke="#7d6216"/></svg><span class="t" style="left:51.5px;top:338px;letter-spacing:-0.138px;">ZipTest</span><svg class="i" style="left:29px;top:357px" width="16" height="16" viewBox="0 0 16 16"><g transform="translate(-1.2 0.6) scale(1.15 1)"><path d="M1.5 5Q1.5 3.6 3 3.6H5V13.5H3.2Q1.5 13.5 1.5 11.8Z" fill="#fdf2a4" stroke="#b08c28"/><path d="M4.5 0.6H12.5V9H4.5Z" fill="#eef5ff" stroke="#5a86c8" stroke-width=".9"/><path d="M4.5 0.6H12.5V2.4H4.5Z" fill="#6ea2e6"/><path d="M6 4H11M6 5.8H11" stroke="#8fb0e0" stroke-width=".8"/><path d="M1.5 7.5H14.5V11.8Q14.5 13.5 12.8 13.5H3.2Q1.5 13.5 1.5 11.8Z" fill="url(#gF)" stroke="#a08020"/><path d="M5 9H11V11.4H5Z" fill="#f4f4ee" stroke="#b8a860" stroke-width=".6"/></g></svg><span class="t" style="left:51.5px;top:358px;letter-spacing:-0.322px;">My Documents</span><svg class="i" style="left:29px;top:377px" width="16" height="16" viewBox="0 0 16 16"><g transform="translate(2 0.6)"><path d="M2.6 1L11 0.2L10.4 8.6L2.2 8.2Z" fill="url(#gM)" stroke="#5a94d8" stroke-width=".8" stroke-linejoin="round"/><path d="M5.6 8.4H8.2L8.6 11.4H5Z" fill="#4c74cc"/><ellipse cx="6.8" cy="12.8" rx="4.4" ry="2.2" fill="#d0d0e6" stroke="#9c9cc4" stroke-width=".7"/><path d="M3.4 12.2Q6.8 10.8 10.2 12.2" stroke="#fff" stroke-width=".8" fill="none"/></g></svg><span class="t" style="left:51.5px;top:378px;letter-spacing:-0.276px;">My Computer</span><svg class="i" style="left:29px;top:397px" width="16" height="16" viewBox="0 0 16 16"><circle cx="4.8" cy="5.6" r="4.6" fill="url(#gE)" stroke="#0d3f8e" stroke-width=".5"/><path d="M2.27 2.38q2.3 -1.6099999999999999 4.14 -0.22999999999999998q-0.45999999999999996 2.3 -2.07 2.53q-2.3 1.38 -3.4499999999999997 0.69q-0.45999999999999996 -1.8399999999999999 1.38 -2.9899999999999998z" fill="#2f9e3e"/><path d="M6.41 5.83q1.8399999999999999 -0.45999999999999996 2.53 0.9199999999999999q-0.9199999999999999 2.3 -2.76 2.76q-0.9199999999999999 -1.8399999999999999 0.22999999999999998 -3.6799999999999997z" fill="#2f9e3e"/><g transform="translate(4.4 0.8)"><path d="M2.6 1L11 0.2L10.4 8.6L2.2 8.2Z" fill="url(#gM)" stroke="#5a94d8" stroke-width=".8" stroke-linejoin="round"/><path d="M5.6 8.4H8.2L8.6 11.4H5Z" fill="#4c74cc"/><ellipse cx="6.8" cy="12.8" rx="4.4" ry="2.2" fill="#d0d0e6" stroke="#9c9cc4" stroke-width=".7"/><path d="M3.4 12.2Q6.8 10.8 10.2 12.2" stroke="#fff" stroke-width=".8" fill="none"/></g></svg><span class="t" style="left:51.5px;top:398px;letter-spacing:-0.279px;">My Network Places</span><div style="left:16px;top:439px;width:186px;height:23px;background:#d4d0c8"></div><span class="t b" style="left:28px;top:446px;letter-spacing:0.346px;">Details</span><svg class="i" style="left:182px;top:445px" width="10" height="11" viewBox="0 0 10 11"><path d="M1.5 1.5L5 5L8.5 1.5M1.5 6L5 9.5L8.5 6" fill="none" stroke="#000" stroke-width="1.6"/></svg><div class="lh" style="left:215px;top:97px;width:178px;height:17px;"></div><span class="t" style="left:219.5px;top:100px;letter-spacing:-0.836px;">Name</span><div class="lh" style="left:393px;top:97px;width:97px;height:17px;"></div><span class="t" style="left:463px;top:100px;letter-spacing:-0.602px;">Size</span><div class="lh" style="left:490px;top:97px;width:120px;height:17px;"></div><span class="t" style="left:494.5px;top:100px;letter-spacing:0.035px;">Type</span><svg class="i" style="left:531px;top:103px" width="8" height="5"><path d="M0 4.5L4 0L8 4.5z" fill="#a29e92"/></svg><div class="lh" style="left:610px;top:97px;width:120px;height:17px;"></div><span class="t" style="left:614.5px;top:100px;letter-spacing:-0.067px;">Date Modified</span><div class="lh" style="left:730px;top:97px;width:66px;height:17px;border-right:0;box-shadow:inset 0 -1px 0 #808080"></div><div style="left:490px;top:114px;width:120px;height:462px;background:#f7f7f7"></div><div style="left:234px;top:115px;width:88px;height:17px;background:#d4d0c8"></div><svg class="i" style="left:218px;top:115px" width="16" height="16" viewBox="0 0 16 16"><rect x="2.5" y="2.2" width="10" height="12.3" rx="1.2" fill="#fff" stroke="#7e8ec8"/><path d="M12.5 4V13.5Q12.5 14.5 11.5 14.5H4" stroke="#5c6cb0" fill="none"/><path d="M4.2 0.8V3.2M6.2 0.8V3.2M8.2 0.8V3.2M10.2 0.8V3.2" stroke="#6a5828" stroke-width="1"/><path d="M3 3H12" stroke="#d8c890" stroke-width=".8"/><path d="M5 5.5H10M5 7.5H10M5 9.5H10M5 11.5H8" stroke="#5c88dc" stroke-width="1"/></svg><span class="t" style="left:235.5px;top:117px;letter-spacing:-0.035px;">DemoForPaul.txt</span><span class="t" style="left:460px;top:117px;letter-spacing:-0.215px;">1 KB</span><span class="t" style="left:495px;top:117px;letter-spacing:-0.029px;">Text Document</span><span class="t" style="left:615px;top:117px;letter-spacing:0.064px;">10/18/2011 10:48 AM</span><div class="sb" style="left:4px;top:578px;width:780px;height:18px;"></div><span class="t" style="left:6px;top:581px;letter-spacing:0.012px;">Type: Text Document Date Modified: 10/18/2011 10:48 AM Size: 18 bytes</span></div><div class="win" style="left:490px;top:334px"><div class="win2"></div><div style="left:4px;top:4px;width:792px;height:18px;background:linear-gradient(90deg,#808080,#c0c0c0)"></div><svg class="i" style="left:6px;top:5px" width="16" height="16" viewBox="0 0 16 16"><path d="M0.5 12.5V2.6Q0.5 1.5 1.6 1.5H4.6L6 3.5H12.4Q13.5 3.5 13.5 4.6V6" fill="#f3d45e" stroke="#7d6216"/><path d="M0.7 13.5L2.7 5.5H15.5L13.2 13.5Z" fill="url(#gF)" stroke="#7d6216" stroke-linejoin="round"/></svg><span class="t b" style="left:24px;top:7px;letter-spacing:-0.172px;color:#d4d0c8;">Z4</span><div class="cb" style="left:744px;top:6px"><svg width="14" height="12" viewBox="0 0 14 12" style="position:absolute;left:0;top:0"><rect x="3" y="8" width="6" height="2" fill="#000"/></svg></div><div class="cb" style="left:760px;top:6px"><svg width="14" height="12" viewBox="0 0 14 12" style="position:absolute;left:0;top:0"><path d="M2.5 1.5h8v8h-8z" fill="none" stroke="#000" stroke-width="1"/><rect x="2" y="1" width="9" height="2" fill="#000"/></svg></div><div class="cb" style="left:778px;top:6px"><svg width="14" height="12" viewBox="0 0 14 12" style="position:absolute;left:0;top:0"><path d="M3.5 2.5l6 6M4.5 2.5l6 6M9.5 2.5l-6 6M10.5 2.5l-6 6" stroke="#000" stroke-width="1" fill="none" stroke-linecap="square"/></svg></div><div style="left:4px;top:23px;width:792px;height:1px;background:#808080"></div><div style="left:4px;top:24px;width:792px;height:1px;background:#fff"></div><div style="left:4px;top:23px;width:1px;height:73px;background:#808080"></div><div style="left:5px;top:24px;width:1px;height:71px;background:#fff"></div><div style="left:794px;top:24px;width:1px;height:71px;background:#fff"></div><div style="left:5px;top:47px;width:790px;height:1px;background:#808080"></div><div style="left:5px;top:48px;width:790px;height:1px;background:#fff"></div><div style="left:5px;top:71px;width:790px;height:1px;background:#808080"></div><div style="left:5px;top:72px;width:790px;height:1px;background:#fff"></div><div style="left:4px;top:95px;width:792px;height:1px;background:#808080"></div><span class="t" style="left:13px;top:30px;letter-spacing:-0.434px;color:#808080;"><u>F</u>ile</span><span class="t" style="left:46px;top:30px;letter-spacing:-0.492px;color:#808080;"><u>E</u>dit</span><span class="t" style="left:80px;top:30px;letter-spacing:-0.539px;color:#808080;"><u>V</u>iew</span><span class="t" style="left:117px;top:30px;letter-spacing:0.083px;color:#808080;">Fa<u>v</u>orites</span><span class="t" style="left:179px;top:30px;letter-spacing:-0.237px;color:#808080;"><u>T</u>ools</span><span class="t" style="left:219px;top:30px;letter-spacing:-0.406px;color:#808080;"><u>H</u>elp</span><div style="left:304px;top:25px;width:1px;height:22px;background:#808080"></div><div style="left:305px;top:25px;width:1px;height:22px;background:#fff"></div><span class="t" style="left:309px;top:30px;letter-spacing:-0.537px;">Links</span><svg class="i" style="left:340px;top:29px" width="16" height="16" viewBox="0 0 16 16"><path d="M0.5 3.2Q0.5 1.5 2.2 1.5H5.4Q6.3 1.5 6.9 2.3L7.8 3.5H13.8Q15.5 3.5 15.5 5.2V12Q15.5 13.7 13.8 13.7H2.2Q0.5 13.7 0.5 12Z" fill="#fdf2a4" stroke="#b08c28"/><path d="M1.5 5.5H14.5V11.8Q14.5 12.7 13.6 12.7H2.4Q1.5 12.7 1.5 11.8Z" fill="url(#gF)"/><path d="M1.2 5H14.8" stroke="#c6a23c" stroke-width="1" opacity=".85"/><path d="M15.5 5V12Q15.5 13.7 13.8 13.7H2.5" fill="none" stroke="#7d6216"/></svg><span class="t" style="left:359.5px;top:30px;letter-spacing:-0.120px;">ReportingProjects</span><svg class="i" style="left:457px;top:29px" width="16" height="16" viewBox="0 0 16 16"><path d="M0.5 3.2Q0.5 1.5 2.2 1.5H5.4Q6.3 1.5 6.9 2.3L7.8 3.5H13.8Q15.5 3.5 15.5 5.2V12Q15.5 13.7 13.8 13.7H2.2Q0.5 13.7 0.5 12Z" fill="#fdf2a4" stroke="#b08c28"/><path d="M1.5 5.5H14.5V11.8Q14.5 12.7 13.6 12.7H2.4Q1.5 12.7 1.5 11.8Z" fill="url(#gF)"/><path d="M1.2 5H14.8" stroke="#c6a23c" stroke-width="1" opacity=".85"/><path d="M15.5 5V12Q15.5 13.7 13.8 13.7H2.5" fill="none" stroke="#7d6216"/></svg><span class="t" style="left:476.5px;top:30px;letter-spacing:-0.453px;">BI</span><svg class="i" style="left:498px;top:29px" width="16" height="16" viewBox="0 0 16 16"><path d="M0.5 3.2Q0.5 1.5 2.2 1.5H5.4Q6.3 1.5 6.9 2.3L7.8 3.5H13.8Q15.5 3.5 15.5 5.2V12Q15.5 13.7 13.8 13.7H2.2Q0.5 13.7 0.5 12Z" fill="#fdf2a4" stroke="#b08c28"/><path d="M1.5 5.5H14.5V11.8Q14.5 12.7 13.6 12.7H2.4Q1.5 12.7 1.5 11.8Z" fill="url(#gF)"/><path d="M1.2 5H14.8" stroke="#c6a23c" stroke-width="1" opacity=".85"/><path d="M15.5 5V12Q15.5 13.7 13.8 13.7H2.5" fill="none" stroke="#7d6216"/></svg><span class="t" style="left:517.5px;top:30px;letter-spacing:-0.094px;">Projects</span><svg class="i" style="left:568px;top:29px" width="16" height="16" viewBox="0 0 16 16"><path d="M0.5 3.2Q0.5 1.5 2.2 1.5H5.4Q6.3 1.5 6.9 2.3L7.8 3.5H13.8Q15.5 3.5 15.5 5.2V12Q15.5 13.7 13.8 13.7H2.2Q0.5 13.7 0.5 12Z" fill="#fdf2a4" stroke="#b08c28"/><path d="M1.5 5.5H14.5V11.8Q14.5 12.7 13.6 12.7H2.4Q1.5 12.7 1.5 11.8Z" fill="url(#gF)"/><path d="M1.2 5H14.8" stroke="#c6a23c" stroke-width="1" opacity=".85"/><path d="M15.5 5V12Q15.5 13.7 13.8 13.7H2.5" fill="none" stroke="#7d6216"/></svg><span class="t" style="left:587.5px;top:30px;letter-spacing:-0.071px;">ReportServers</span><div style="left:756px;top:24px;width:39px;height:23px;background:#fff"></div><div style="left:754px;top:25px;width:1px;height:22px;background:#808080"></div><div style="left:755px;top:25px;width:1px;height:22px;background:#fff"></div><svg class="i" style="left:764px;top:27px" width="22" height="18" viewBox="0 0 22 18"><path d="M4.2 2.4Q7.4 0.2 10.8 2L9.4 8.4Q6.2 6.8 2.8 8.8Z" fill="#ea5428"/><path d="M11.8 2.6Q15.2 4.6 19.4 2.4L18 9Q14 11.2 10.4 9Z" fill="#6cb82e"/><path d="M2.6 9.8Q5.8 7.8 9.2 9.4L7.8 15.8Q4.4 14.2 1.2 16.2Z" fill="#3c8ee4"/><path d="M10.2 10Q13.6 12.2 17.8 10L16.4 16.4Q12.4 18.6 8.8 16.4Z" fill="#f6ba1e"/></svg><svg class="i" style="left:8px;top:52px" width="17" height="17" viewBox="0 0 17 17"><circle cx="8.5" cy="8.5" r="7" fill="url(#gC)" stroke="#9a9a9a"/><circle cx="8.5" cy="8.5" r="6" fill="none" stroke="#e6e6e6" stroke-width=".6" opacity=".3"/><path d="M3.6 8.5L8.4 3.9V6.9H13V10.1H8.4V13.1Z" fill="#fff"/></svg><span class="t sh" style="left:28.3px;top:54px;letter-spacing:-0.617px;color:#808080;">Back</span><svg class="i" style="left:60px;top:59px" width="7" height="5" viewBox="0 0 7 5"><path d="M1 1h5l-2.5 3z" fill="#fff"/><path d="M0 0h5l-2.5 3z" fill="#808080"/></svg><svg class="i" style="left:72px;top:52px" width="17" height="17" viewBox="0 0 17 17"><circle cx="8.5" cy="8.5" r="7" fill="url(#gC)" stroke="#9a9a9a"/><circle cx="8.5" cy="8.5" r="6" fill="none" stroke="#e6e6e6" stroke-width=".6" opacity=".3"/><path d="M13.4 8.5L8.6 3.9V6.9H4V10.1H8.6V13.1Z" fill="#fff"/></svg><svg class="i" style="left:97px;top:59px" width="7" height="5" viewBox="0 0 7 5"><path d="M1 1h5l-2.5 3z" fill="#fff"/><path d="M0 0h5l-2.5 3z" fill="#808080"/></svg><svg class="i" style="left:110px;top:52px" width="17" height="17" viewBox="0 0 17 17"><path d="M0.8 7.2Q0.8 6 2 6H3.8L4.8 7.2H8.4Q9.4 7.2 9.4 8.2V13.4Q9.4 14.6 8.2 14.6H2Q0.8 14.6 0.8 13.4Z" fill="#f8e27c" stroke="#c8a83a" stroke-width=".8"/><path d="M10 0.6L14.6 5.4H12.2Q12.2 10.5 8.6 13.8L6.6 12.2Q8.6 9.5 8.2 5.4H5.4Z" fill="#30b530" stroke="#127a1e" stroke-width=".9" stroke-linejoin="round"/><path d="M10 2.2L8 4.4M10.2 5Q10.4 9 8.4 12" stroke="#8fe88f" stroke-width=".8" fill="none" opacity=".8"/></svg><div style="left:132px;top:51px;width:1px;height:18px;background:#808080"></div><div style="left:133px;top:51px;width:1px;height:18px;background:#fff"></div><svg class="i" style="left:138px;top:52px" width="17" height="17" viewBox="0 0 17 17"><path d="M7.2 8.8L2 14" stroke="#c88a5c" stroke-width="2.2" stroke-linecap="round"/><path d="M7.4 8.2L5.4 10.2" stroke="#b0b0b8" stroke-width="2"/><circle cx="11" cy="5.2" r="4.5" fill="#d4eafa" stroke="#8fb2d4" stroke-width="1.1"/><path d="M8.4 4.6Q9.2 2.4 11.6 2.4" stroke="#fff" stroke-width="1.2" fill="none"/></svg><span class="t" style="left:158.5px;top:54px;letter-spacing:-0.360px;">Search</span><svg class="i" style="left:202px;top:52px" width="17" height="16" viewBox="0 0 17 16"><path d="M1.5 13.5V3.6Q1.5 2.5 2.6 2.5H5.8L7.3 4.5H12.5Q13.5 4.5 13.5 5.5V7" fill="#f3e18c" stroke="#cdb458"/><path d="M1.6 13.5L4.4 7H15.8L12.8 13.5Z" fill="#fdf4b4" stroke="#cdb458" stroke-linejoin="round"/></svg><span class="t" style="left:222.5px;top:54px;letter-spacing:-0.270px;">Folders</span><div style="left:268px;top:51px;width:1px;height:18px;background:#808080"></div><div style="left:269px;top:51px;width:1px;height:18px;background:#fff"></div><svg class="i" style="left:276px;top:52px" width="17" height="16" viewBox="0 0 17 16"><rect x="1.5" y="1.5" width="14" height="13" fill="#fff" stroke="#2b60c6"/><rect x="1" y="1" width="15" height="3.6" fill="#3c78de"/><rect x="1" y="1" width="15" height="1" fill="#6c9cec"/><rect x="3.6" y="6.2" width="2.4" height="2.4" fill="#9c8cb4"/><rect x="7.4" y="6.2" width="2.4" height="2.4" fill="#1a3e96"/><rect x="11.2" y="6.2" width="2.4" height="2.4" fill="#2c8c3c"/><rect x="3.6" y="10.2" width="2.4" height="2.4" fill="#d4704c"/><rect x="7.4" y="10.2" width="2.4" height="2.4" fill="#10368c"/><rect x="11.2" y="10.2" width="2.4" height="2.4" fill="#b4a03c"/></svg><svg class="i" style="left:294px;top:59px" width="6" height="4" viewBox="0 0 6 4"><path d="M0 0h5l-2.5 3z" fill="#000"/></svg><span class="t" style="left:10px;top:78px;letter-spacing:-0.337px;">A<u>d</u>dress</span><div class="combo" style="left:53px;top:73px;width:684px;height:22px;"></div><svg class="i" style="left:56px;top:76px" width="16" height="16" viewBox="0 0 16 16"><path d="M0.5 3.2Q0.5 1.5 2.2 1.5H5.4Q6.3 1.5 6.9 2.3L7.8 3.5H13.8Q15.5 3.5 15.5 5.2V12Q15.5 13.7 13.8 13.7H2.2Q0.5 13.7 0.5 12Z" fill="#fdf2a4" stroke="#b08c28"/><path d="M1.5 5.5H14.5V11.8Q14.5 12.7 13.6 12.7H2.4Q1.5 12.7 1.5 11.8Z" fill="url(#gF)"/><path d="M1.2 5H14.8" stroke="#c6a23c" stroke-width="1" opacity=".85"/><path d="M15.5 5V12Q15.5 13.7 13.8 13.7H2.5" fill="none" stroke="#7d6216"/></svg><span class="t" style="left:75.5px;top:78px;letter-spacing:-0.224px;">C:\TEMP\ZipTest\Z4</span><div class="ddb" style="left:719px;top:75px"><svg width="16" height="18" viewBox="0 0 16 18" style="position:absolute;left:-1px;top:-1px"><path d="M4 7h7l-3.5 4z" fill="#000"/></svg></div><svg class="i" style="left:743px;top:75px" width="18" height="18" viewBox="0 0 18 18"><rect x="0.5" y="0.5" width="17" height="17" rx="1.8" fill="url(#gG)" stroke="#a4dca4"/><path d="M3.6 9H13M9.4 4.8L13.6 9L9.4 13.2" fill="none" stroke="#fff" stroke-width="2.1" stroke-linejoin="miter"/></svg><span class="t" style="left:766px;top:78px;letter-spacing:-1.094px;">Go</span><div style="left:4px;top:96px;width:792px;height:480px;background:#fff"></div><div style="left:16px;top:109px;width:186px;height:23px;background:#d4d0c8"></div><span class="t b" style="left:28px;top:116px;letter-spacing:0.235px;">File and Folder Tasks</span><svg class="i" style="left:182px;top:115px" width="10" height="11" viewBox="0 0 10 11"><path d="M1.5 5L5 1.5L8.5 5M1.5 9.5L5 6L8.5 9.5" fill="none" stroke="#000" stroke-width="1.6"/></svg><div style="left:16px;top:132px;width:186px;height:87px;border:1px solid #d4d0c8;border-top:0;background:#fff"></div><svg class="i" style="left:29px;top:142px" width="16" height="16" viewBox="0 0 16 16"><path d="M1.5 13.5V3.6Q1.5 2.5 2.6 2.5H5.8L7.3 4.5H12.5Q13.5 4.5 13.5 5.5V7" fill="#f0d672" stroke="#a88a2a"/><path d="M1.6 13.5L4.4 7H15.8L12.8 13.5Z" fill="#fbea94" stroke="#a88a2a" stroke-linejoin="round"/><path d="M12.2 0L13 2.4L15.6 1.6L14 3.6L16 5.2L13.4 5.2L12.8 7.6L11.8 5.4L9.2 6L11 4L9.4 2L11.6 2.4Z" fill="#f28c1e" stroke="#e0681a" stroke-width=".4"/><circle cx="12.4" cy="3.8" r="1" fill="#ffd890"/></svg><span class="t" style="left:51.5px;top:143px;letter-spacing:-0.170px;">Make a new folder</span><svg class="i" style="left:29px;top:162px" width="16" height="16" viewBox="0 0 16 16"><circle cx="8" cy="8" r="7.5" fill="url(#gE)" stroke="#0d3f8e" stroke-width=".5"/><path d="M3.875 2.75q3.75 -2.625 6.75 -0.375q-0.75 3.75 -3.375 4.125q-3.75 2.25 -5.625 1.125q-0.75 -3.0 2.25 -4.875z" fill="#2f9e3e"/><path d="M10.625 8.375q3.0 -0.75 4.125 1.5q-1.5 3.75 -4.5 4.5q-1.5 -3.0 0.375 -6.0z" fill="#2f9e3e"/><path d="M8 5.2L13.4 10.8H10.6V15.2H5.4V10.8H2.6Z" fill="#34c234" stroke="#0c6a1c" stroke-width=".9" stroke-linejoin="round"/><path d="M8 6.2L4.2 10.2M8 6.2L11.8 10.2" stroke="#b4f4a0" stroke-width=".8" fill="none"/></svg><span class="t" style="left:51.5px;top:163px;letter-spacing:-0.062px;">Publish this folder to the</span><span class="t" style="left:51.5px;top:176px;letter-spacing:-0.974px;">Web</span><svg class="i" style="left:29px;top:192px" width="16" height="16" viewBox="0 0 16 16"><path d="M1.5 13.5V3.6Q1.5 2.5 2.6 2.5H5.8L7.3 4.5H12.5Q13.5 4.5 13.5 5.5V7" fill="#f0d672" stroke="#a88a2a"/><path d="M1.6 13.5L4.4 7H15.8L12.8 13.5Z" fill="#fbea94" stroke="#a88a2a" stroke-linejoin="round"/><path d="M2.2 11.2L6.5 10.4H10.6Q11.8 11 10.8 11.9H8.2L12.4 12.3L11 14.2H5.5L2.2 15Z" fill="#f3c9a0" stroke="#9a6a3a" stroke-width=".6"/><rect x="0" y="10.6" width="2.6" height="5" fill="#1c1c2c"/></svg><span class="t" style="left:51.5px;top:193px;letter-spacing:-0.124px;">Share this folder</span><div style="left:16px;top:234px;width:186px;height:23px;background:#d4d0c8"></div><span class="t b" style="left:28px;top:241px;letter-spacing:0.270px;">Other Places</span><svg class="i" style="left:182px;top:240px" width="10" height="11" viewBox="0 0 10 11"><path d="M1.5 5L5 1.5L8.5 5M1.5 9.5L5 6L8.5 9.5" fill="none" stroke="#000" stroke-width="1.6"/></svg><div style="left:16px;top:257px;width:186px;height:97px;border:1px solid #d4d0c8;border-top:0;background:#fff"></div><svg class="i" style="left:29px;top:268px" width="16" height="16" viewBox="0 0 16 16"><path d="M0.5 3.2Q0.5 1.5 2.2 1.5H5.4Q6.3 1.5 6.9 2.3L7.8 3.5H13.8Q15.5 3.5 15.5 5.2V12Q15.5 13.7 13.8 13.7H2.2Q0.5 13.7 0.5 12Z" fill="#fdf2a4" stroke="#b08c28"/><path d="M1.5 5.5H14.5V11.8Q14.5 12.7 13.6 12.7H2.4Q1.5 12.7 1.5 11.8Z" fill="url(#gF)"/><path d="M1.2 5H14.8" stroke="#c6a23c" stroke-width="1" opacity=".85"/><path d="M15.5 5V12Q15.5 13.7 13.8 13.7H2.5" fill="none" stroke="#7d6216"/></svg><span class="t" style="left:51.5px;top:268px;letter-spacing:-0.138px;">ZipTest</span><svg class="i" style="left:29px;top:287px" width="16" height="16" viewBox="0 0 16 16"><g transform="translate(-1.2 0.6) scale(1.15 1)"><path d="M1.5 5Q1.5 3.6 3 3.6H5V13.5H3.2Q1.5 13.5 1.5 11.8Z" fill="#fdf2a4" stroke="#b08c28"/><path d="M4.5 0.6H12.5V9H4.5Z" fill="#eef5ff" stroke="#5a86c8" stroke-width=".9"/><path d="M4.5 0.6H12.5V2.4H4.5Z" fill="#6ea2e6"/><path d="M6 4H11M6 5.8H11" stroke="#8fb0e0" stroke-width=".8"/><path d="M1.5 7.5H14.5V11.8Q14.5 13.5 12.8 13.5H3.2Q1.5 13.5 1.5 11.8Z" fill="url(#gF)" stroke="#a08020"/><path d="M5 9H11V11.4H5Z" fill="#f4f4ee" stroke="#b8a860" stroke-width=".6"/></g></svg><span class="t" style="left:51.5px;top:288px;letter-spacing:-0.322px;">My Documents</span><svg class="i" style="left:29px;top:307px" width="16" height="16" viewBox="0 0 16 16"><g transform="translate(2 0.6)"><path d="M2.6 1L11 0.2L10.4 8.6L2.2 8.2Z" fill="url(#gM)" stroke="#5a94d8" stroke-width=".8" stroke-linejoin="round"/><path d="M5.6 8.4H8.2L8.6 11.4H5Z" fill="#4c74cc"/><ellipse cx="6.8" cy="12.8" rx="4.4" ry="2.2" fill="#d0d0e6" stroke="#9c9cc4" stroke-width=".7"/><path d="M3.4 12.2Q6.8 10.8 10.2 12.2" stroke="#fff" stroke-width=".8" fill="none"/></g></svg><span class="t" style="left:51.5px;top:308px;letter-spacing:-0.276px;">My Computer</span><svg class="i" style="left:29px;top:327px" width="16" height="16" viewBox="0 0 16 16"><circle cx="4.8" cy="5.6" r="4.6" fill="url(#gE)" stroke="#0d3f8e" stroke-width=".5"/><path d="M2.27 2.38q2.3 -1.6099999999999999 4.14 -0.22999999999999998q-0.45999999999999996 2.3 -2.07 2.53q-2.3 1.38 -3.4499999999999997 0.69q-0.45999999999999996 -1.8399999999999999 1.38 -2.9899999999999998z" fill="#2f9e3e"/><path d="M6.41 5.83q1.8399999999999999 -0.45999999999999996 2.53 0.9199999999999999q-0.9199999999999999 2.3 -2.76 2.76q-0.9199999999999999 -1.8399999999999999 0.22999999999999998 -3.6799999999999997z" fill="#2f9e3e"/><g transform="translate(4.4 0.8)"><path d="M2.6 1L11 0.2L10.4 8.6L2.2 8.2Z" fill="url(#gM)" stroke="#5a94d8" stroke-width=".8" stroke-linejoin="round"/><path d="M5.6 8.4H8.2L8.6 11.4H5Z" fill="#4c74cc"/><ellipse cx="6.8" cy="12.8" rx="4.4" ry="2.2" fill="#d0d0e6" stroke="#9c9cc4" stroke-width=".7"/><path d="M3.4 12.2Q6.8 10.8 10.2 12.2" stroke="#fff" stroke-width=".8" fill="none"/></g></svg><span class="t" style="left:51.5px;top:328px;letter-spacing:-0.279px;">My Network Places</span><div style="left:16px;top:369px;width:186px;height:23px;background:#d4d0c8"></div><span class="t b" style="left:28px;top:376px;letter-spacing:0.346px;">Details</span><svg class="i" style="left:182px;top:375px" width="10" height="11" viewBox="0 0 10 11"><path d="M1.5 1.5L5 5L8.5 1.5M1.5 6L5 9.5L8.5 6" fill="none" stroke="#000" stroke-width="1.6"/></svg><div class="lh" style="left:215px;top:97px;width:178px;height:17px;"></div><span class="t" style="left:219.5px;top:100px;letter-spacing:-0.836px;">Name</span><div class="lh" style="left:393px;top:97px;width:97px;height:17px;"></div><span class="t" style="left:463px;top:100px;letter-spacing:-0.602px;">Size</span><div class="lh" style="left:490px;top:97px;width:120px;height:17px;"></div><span class="t" style="left:494.5px;top:100px;letter-spacing:0.035px;">Type</span><svg class="i" style="left:531px;top:103px" width="8" height="5"><path d="M0 4.5L4 0L8 4.5z" fill="#a29e92"/></svg><div class="lh" style="left:610px;top:97px;width:120px;height:17px;"></div><span class="t" style="left:614.5px;top:100px;letter-spacing:-0.067px;">Date Modified</span><div class="lh" style="left:730px;top:97px;width:66px;height:17px;border-right:0;box-shadow:inset 0 -1px 0 #808080"></div><div style="left:490px;top:114px;width:120px;height:462px;background:#f7f7f7"></div><svg class="i" style="left:218px;top:115px" width="16" height="16" viewBox="0 0 16 16"><rect x="2.5" y="2.2" width="10" height="12.3" rx="1.2" fill="#fff" stroke="#7e8ec8"/><path d="M12.5 4V13.5Q12.5 14.5 11.5 14.5H4" stroke="#5c6cb0" fill="none"/><path d="M4.2 0.8V3.2M6.2 0.8V3.2M8.2 0.8V3.2M10.2 0.8V3.2" stroke="#6a5828" stroke-width="1"/><path d="M3 3H12" stroke="#d8c890" stroke-width=".8"/><path d="M5 5.5H10M5 7.5H10M5 9.5H10M5 11.5H8" stroke="#5c88dc" stroke-width="1"/></svg><span class="t" style="left:235.5px;top:117px;letter-spacing:-0.035px;">DemoForPaul.txt</span><span class="t" style="left:460px;top:117px;letter-spacing:-0.215px;">1 KB</span><span class="t" style="left:495px;top:117px;letter-spacing:-0.029px;">Text Document</span><span class="t" style="left:615px;top:117px;letter-spacing:0.064px;">10/18/2011 10:48 AM</span><div class="sb" style="left:4px;top:578px;width:780px;height:18px;"></div><span class="t" style="left:6px;top:581px;letter-spacing:0.012px;">Type: Text Document Date Modified: 10/18/2011 10:48 AM Size: 18 bytes</span></div></div></body></html>
